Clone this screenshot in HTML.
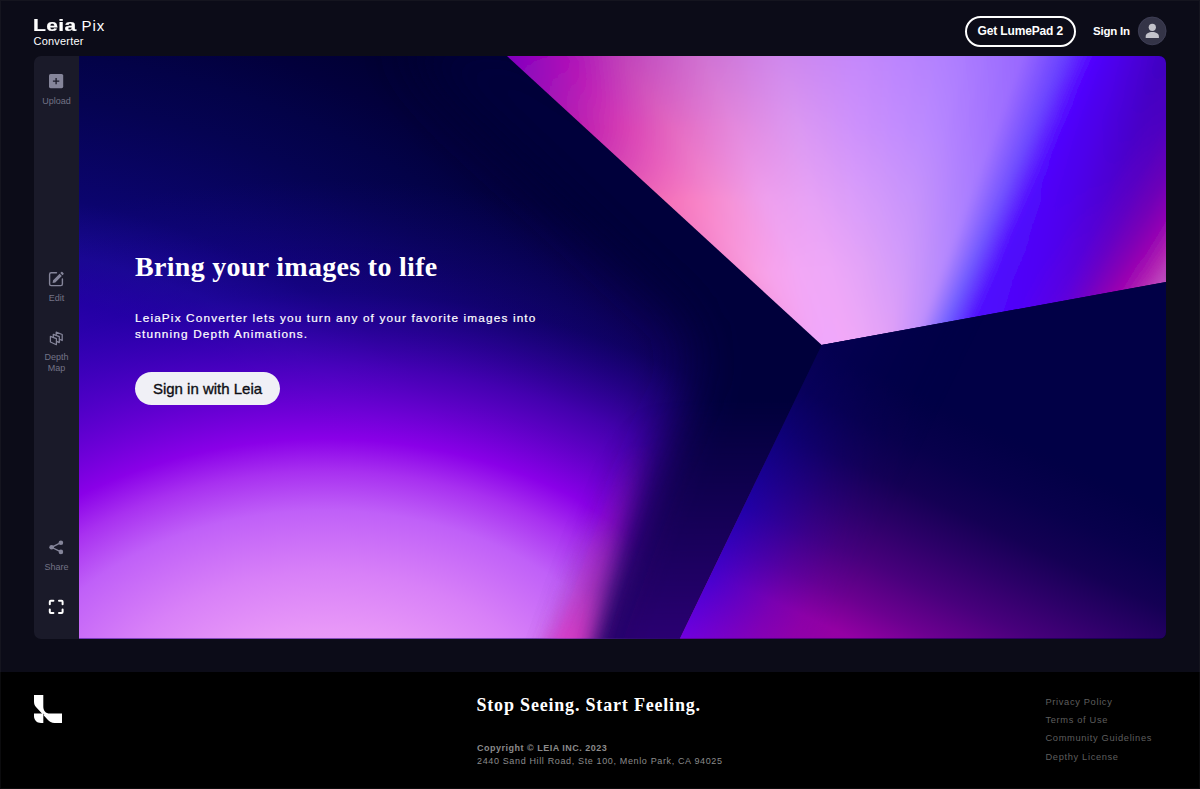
<!DOCTYPE html>
<html lang="en">
<head>
<meta charset="utf-8">
<title>LeiaPix Converter</title>
<style>
*{box-sizing:border-box;margin:0;padding:0}
html,body{width:1200px;height:789px;overflow:hidden;background:#0c0c18;font-family:"Liberation Sans",sans-serif;color:#fff}
#frame{position:absolute;left:0;top:0;width:1200px;height:789px;border:1px solid #15151f;pointer-events:none;z-index:50}
#frame2{position:absolute;left:0;top:672px;width:1200px;height:117px;border:1px solid #0b0b0d;border-top:none;pointer-events:none;z-index:51}
.abs{position:absolute;white-space:nowrap}
/* header */
#logo-leia{left:33px;top:15px;font-size:16.5px;font-weight:bold;letter-spacing:.3px;line-height:20px;transform:scaleX(1.27);transform-origin:0 50%;-webkit-text-stroke:.2px #fff}
#logo-pix{left:81.5px;top:15.5px;font-size:15px;letter-spacing:.9px;line-height:20px}
#logo-conv{left:33.5px;top:33.5px;font-size:11px;letter-spacing:.2px;line-height:14px}
#btn-lume{left:964.5px;top:15.5px;width:111.5px;height:31px;border:2px solid #fff;border-radius:16px;font-size:12px;font-weight:bold;text-align:center;line-height:27px;letter-spacing:-.15px}
#signin{left:1093px;top:23px;font-size:11.5px;font-weight:bold;line-height:16px;letter-spacing:-.2px}
#avatar{left:1138px;top:17px;width:28.5px;height:28.5px;border-radius:50%;background:#3b3b4b}
/* sidebar */
#side{left:34px;top:56px;width:45px;height:582.5px;background:#1a1a29;border-radius:7px 0 0 7px}
.slabel{font-size:9px;color:#737386;text-align:center;width:45px;left:34px;line-height:11px;white-space:normal}
/* hero */
#hero{left:79px;top:56px;width:1087px;height:582.5px;border-radius:0 7px 7px 0;overflow:hidden;background:#00003c}
#hero svg{display:block}
#h1{left:135px;top:250.3px;font-family:"Liberation Serif",serif;font-weight:bold;font-size:28px;line-height:34px;letter-spacing:.3px}
#para{left:135px;top:310.3px;font-size:11.8px;line-height:16px;letter-spacing:1.14px;-webkit-text-stroke:.2px #fff}
#cta{left:135px;top:371.5px;width:145px;height:33px;border-radius:17px;background:#f0f0f6;color:#0e0e14;font-size:15px;text-align:center;line-height:33px;-webkit-text-stroke:.35px #0e0e14}
/* footer */
#footer{left:0;top:672px;width:1200px;height:117px;background:#000}
#tag{left:476.5px;top:693.5px;font-family:"Liberation Serif",serif;font-weight:bold;font-size:18px;line-height:22px;letter-spacing:.81px}
#copy1{left:477px;top:742.4px;font-size:9px;letter-spacing:.5px;font-weight:bold;color:#8b8b8b;line-height:12px}
#copy2{left:477px;top:755px;font-size:9px;letter-spacing:.64px;color:#8b8b8b;line-height:12px}
.flink{left:1045.5px;font-size:9.3px;letter-spacing:.65px;color:#5e5e5e;line-height:12px}
</style>
</head>
<body>
<div id="frame"></div>
<div id="frame2"></div>

<div id="logo-leia" class="abs">Leia</div>
<div id="logo-pix" class="abs">Pix</div>
<div id="logo-conv" class="abs">Converter</div>
<div id="btn-lume" class="abs">Get LumePad 2</div>
<div id="signin" class="abs">Sign In</div>


<div id="side" class="abs"></div>
<div class="abs slabel" style="top:96px">Upload</div>
<div class="abs slabel" style="top:293px">Edit</div>
<div class="abs slabel" style="top:352px">Depth<br>Map</div>
<div class="abs slabel" style="top:561.5px">Share</div>


<svg class="abs" style="left:34px;top:56px" width="45" height="583" viewBox="34 56 45 583">
  <!-- upload (add box) -->
  <rect x="49" y="74" width="14.2" height="14.2" rx="1.6" fill="#85859a"/>
  <path d="M56.1 77.9v6.4M52.9 81.1h6.4" stroke="#1a1a29" stroke-width="1.3" fill="none"/>
  <!-- edit square -->
  <path d="M56.5 272.8H51.2a1.6 1.6 0 0 0-1.6 1.6v9.6a1.6 1.6 0 0 0 1.6 1.6h9.6a1.6 1.6 0 0 0 1.6-1.6V279" stroke="#85859a" stroke-width="1.4" fill="none" stroke-linecap="round"/>
  <path d="M52.6 283l.5-2.7 6.5-6.5 2.2 2.2-6.5 6.5zM60.3 273.1l1-1a.8.8 0 0 1 1.1 0l1.1 1.1a.8.8 0 0 1 0 1.1l-1 1z" fill="#85859a"/>
  <!-- depth map layers -->
  <g stroke="#85859a" stroke-width="1.25" fill="#1a1a29" stroke-linejoin="round">
    <path d="M56.2 332.2L62.2 334.5L62.2 340.5L56.2 337.8z"/>
    <path d="M53.3 334.3L59.3 336.6L59.3 342.6L53.3 339.9z"/>
    <path d="M50.4 336.4L56.4 338.7L56.4 344.7L50.4 342.0z"/>
  </g>
  <!-- share -->
  <g fill="#85859a">
    <circle cx="60.9" cy="542.7" r="2.3"/><circle cx="51.6" cy="547.3" r="2.3"/><circle cx="60.9" cy="551.9" r="2.3"/>
  </g>
  <path d="M60.9 542.7L51.6 547.3L60.9 551.9" stroke="#85859a" stroke-width="1.3" fill="none"/>
  <!-- fullscreen -->
  <path d="M49.8 604.2v-2.4a1 1 0 0 1 1-1h2.6M59 600.8h2.6a1 1 0 0 1 1 1v2.4M62.6 609.6v2.4a1 1 0 0 1-1 1H59M53.4 613h-2.6a1 1 0 0 1-1-1v-2.4" stroke="#fff" stroke-width="2" fill="none" stroke-linecap="round" stroke-linejoin="round"/>
</svg>
<svg class="abs" style="left:1136px;top:14px" width="34" height="34" viewBox="1136 14 34 34">
  <circle cx="1152.2" cy="30.9" r="13.9" fill="#343447" stroke="#43435a" stroke-width=".8"/>
  <circle cx="1152.3" cy="27.3" r="3.6" fill="#c2c2ca"/>
  <path d="M1145.7 38v-1.6c0-2.6 3-4.3 6.6-4.3s6.6 1.7 6.6 4.3V38z" fill="#c2c2ca"/>
</svg>
<svg class="abs" style="left:33.8px;top:694.8px;z-index:5" width="28" height="28" viewBox="0 0 28 28">
  <path d="M0 0H9.3V11.5C9.3 15.5 11.5 18.6 16 18.6H28V28H20.5C17.5 28 15.5 26.8 13.5 24.6L2.2 12.3C.7 10.7 0 9 0 6.5Z" fill="#fff"/>
  <path d="M0 18.6H9.3V28H7C2.8 28 0 25.2 0 21Z" fill="#fff"/>
  <path d="M8.2 17.5L10.5 19.8L9.3 19.8L9.3 18.6Z" fill="#000"/>
</svg>
<div id="hero" class="abs">
<svg width="1087" height="582.5" viewBox="79 56 1087 582.5">
<defs>
  <clipPath id="cA"><polygon points="79,56 507,56 821.7,345.1 680,638.5 79,638.5"/></clipPath>
  <clipPath id="cB"><polygon points="507,56 1166,56 1166,282 821.7,345.1"/></clipPath>
  <clipPath id="cC"><polygon points="821.7,345.1 1166,282 1166,638.5 680,638.5"/></clipPath>
  <filter id="b3" filterUnits="userSpaceOnUse" x="0" y="-100" width="1400" height="900"><feGaussianBlur stdDeviation="3"/></filter>
  <filter id="b10" filterUnits="userSpaceOnUse" x="0" y="-100" width="1400" height="900"><feGaussianBlur stdDeviation="10"/></filter>
  <filter id="b15" filterUnits="userSpaceOnUse" x="0" y="-100" width="1400" height="900"><feGaussianBlur stdDeviation="15"/></filter>
  <filter id="b20" filterUnits="userSpaceOnUse" x="0" y="-100" width="1400" height="900"><feGaussianBlur stdDeviation="20"/></filter>
  <filter id="b25" filterUnits="userSpaceOnUse" x="0" y="-100" width="1400" height="900"><feGaussianBlur stdDeviation="25"/></filter>
  <filter id="b30" filterUnits="userSpaceOnUse" x="0" y="-100" width="1400" height="900"><feGaussianBlur stdDeviation="30"/></filter>
  <radialGradient id="gAmb" gradientUnits="userSpaceOnUse" cx="-50" cy="700" r="850" gradientTransform="translate(-50 700) scale(1.18 1) translate(50 -700)">
    <stop offset="0" stop-color="#4800c8"/>
    <stop offset="0.385" stop-color="#3800b8"/>
    <stop offset="0.485" stop-color="#2000a0"/>
    <stop offset="0.535" stop-color="#180890"/>
    <stop offset="0.60" stop-color="#0b046e"/>
    <stop offset="0.714" stop-color="#050352"/>
    <stop offset="0.767" stop-color="#030248"/>
    <stop offset="0.821" stop-color="#02003c"/>
    <stop offset="0.896" stop-color="#00002e"/>
    <stop offset="1" stop-color="#00002a"/>
  </radialGradient>
  <radialGradient id="gA" gradientUnits="userSpaceOnUse" cx="325" cy="740" r="560" gradientTransform="translate(325 740) scale(1.4 1) translate(-325 -740)">
    <stop offset="0" stop-color="#f4a4fa"/>
    <stop offset="0.196" stop-color="#e898f8"/>
    <stop offset="0.30" stop-color="#d880f8"/>
    <stop offset="0.41" stop-color="#c060f8"/>
    <stop offset="0.48" stop-color="#a830f0"/>
    <stop offset="0.5375" stop-color="#8a00e8"/>
    <stop offset="0.668" stop-color="#5800cc" stop-opacity=".75"/>
    <stop offset="0.80" stop-color="#3000b4" stop-opacity=".28"/>
    <stop offset="1" stop-color="#2000a0" stop-opacity="0"/>
  </radialGradient>
  <linearGradient id="gShade" gradientUnits="userSpaceOnUse" x1="0" y1="380" x2="0" y2="640">
    <stop offset="0" stop-color="#00003a"/>
    <stop offset="1" stop-color="#1c0064"/>
  </linearGradient>
  <linearGradient id="gMag" gradientUnits="userSpaceOnUse" x1="0" y1="420" x2="0" y2="640">
    <stop offset="0" stop-color="#6000a8" stop-opacity="0"/>
    <stop offset="0.5" stop-color="#8000b0" stop-opacity=".7"/>
    <stop offset="1" stop-color="#e020c0" stop-opacity="1"/>
  </linearGradient>
  <linearGradient id="gC" gradientUnits="userSpaceOnUse" x1="821.7" y1="345.1" x2="683.5" y2="640.5">
    <stop offset="0" stop-color="#010046"/>
    <stop offset="0.03" stop-color="#020046"/>
    <stop offset="0.16" stop-color="#08004c"/>
    <stop offset="0.285" stop-color="#140054"/>
    <stop offset="0.41" stop-color="#2c0068"/>
    <stop offset="0.54" stop-color="#48007c"/>
    <stop offset="0.666" stop-color="#6c0090"/>
    <stop offset="0.775" stop-color="#9400a4"/>
    <stop offset="1" stop-color="#9c00aa"/>
  </linearGradient>
  <linearGradient id="gCv" gradientUnits="userSpaceOnUse" x1="821.7" y1="345.1" x2="680" y2="638.5">
    <stop offset="0" stop-color="#050052"/>
    <stop offset="0.15" stop-color="#08005c"/>
    <stop offset="0.3" stop-color="#0e0078"/>
    <stop offset="0.55" stop-color="#2000a8"/>
    <stop offset="0.8" stop-color="#4800d0"/>
    <stop offset="1" stop-color="#7000e0"/>
  </linearGradient>
  <linearGradient id="gmBot" gradientUnits="userSpaceOnUse" x1="0" y1="400" x2="0" y2="640">
    <stop offset="0" stop-color="#000"/><stop offset="1" stop-color="#fff"/>
  </linearGradient>
  <mask id="mBot" maskUnits="userSpaceOnUse" x="79" y="56" width="1087" height="583"><rect x="79" y="56" width="1087" height="583" fill="url(#gmBot)"/></mask>
  <linearGradient id="gmMag" gradientUnits="userSpaceOnUse" x1="0" y1="440" x2="0" y2="640">
    <stop offset="0" stop-color="#000"/><stop offset="0.45" stop-color="#444"/><stop offset="0.75" stop-color="#888"/><stop offset="1" stop-color="#fff"/>
  </linearGradient>
  <mask id="mMag" maskUnits="userSpaceOnUse" x="79" y="56" width="1087" height="583"><rect x="79" y="56" width="1087" height="583" fill="url(#gmMag)"/></mask>
  <linearGradient id="gmE3" gradientUnits="userSpaceOnUse" x1="821.7" y1="345.1" x2="943.3" y2="403.8">
    <stop offset="0" stop-color="#fff" stop-opacity="1"/>
    <stop offset="0.25" stop-color="#fff" stop-opacity=".66"/>
    <stop offset="0.5" stop-color="#fff" stop-opacity=".33"/>
    <stop offset="0.75" stop-color="#fff" stop-opacity=".1"/>
    <stop offset="1" stop-color="#fff" stop-opacity="0"/>
  </linearGradient>
  <mask id="mE3" maskUnits="userSpaceOnUse" x="79" y="56" width="1087" height="583"><rect x="79" y="56" width="1087" height="583" fill="url(#gmE3)"/></mask>
<linearGradient id="s0" gradientUnits="userSpaceOnUse" x1="444.2" y1="56.0" x2="765.5" y2="354.5"><stop offset="0.00" stop-color="#8000c0"/><stop offset="0.25" stop-color="#c020b0"/><stop offset="0.50" stop-color="#f470b8"/><stop offset="0.75" stop-color="#f894d8"/><stop offset="1.00" stop-color="#f0a8fc"/></linearGradient>
<linearGradient id="s1" gradientUnits="userSpaceOnUse" x1="452.6" y1="56.0" x2="773.0" y2="353.2"><stop offset="0.00" stop-color="#8000c0"/><stop offset="0.25" stop-color="#c020b0"/><stop offset="0.50" stop-color="#f470b8"/><stop offset="0.75" stop-color="#f894d8"/><stop offset="1.00" stop-color="#f0a8fc"/></linearGradient>
<linearGradient id="s2" gradientUnits="userSpaceOnUse" x1="460.9" y1="56.0" x2="780.5" y2="352.0"><stop offset="0.00" stop-color="#8000c0"/><stop offset="0.25" stop-color="#c020b0"/><stop offset="0.50" stop-color="#f470b8"/><stop offset="0.75" stop-color="#f894d8"/><stop offset="1.00" stop-color="#f0a8fc"/></linearGradient>
<linearGradient id="s3" gradientUnits="userSpaceOnUse" x1="469.3" y1="56.0" x2="788.0" y2="350.7"><stop offset="0.00" stop-color="#8000c0"/><stop offset="0.25" stop-color="#c020b0"/><stop offset="0.50" stop-color="#f470b8"/><stop offset="0.75" stop-color="#f894d8"/><stop offset="1.00" stop-color="#f0a8fc"/></linearGradient>
<linearGradient id="s4" gradientUnits="userSpaceOnUse" x1="477.7" y1="56.0" x2="795.5" y2="349.5"><stop offset="0.00" stop-color="#8000c0"/><stop offset="0.25" stop-color="#c020b0"/><stop offset="0.50" stop-color="#f470b8"/><stop offset="0.75" stop-color="#f894d8"/><stop offset="1.00" stop-color="#f0a8fc"/></linearGradient>
<linearGradient id="s5" gradientUnits="userSpaceOnUse" x1="486.1" y1="56.0" x2="803.0" y2="348.2"><stop offset="0.00" stop-color="#8000c0"/><stop offset="0.25" stop-color="#c020b0"/><stop offset="0.50" stop-color="#f470b8"/><stop offset="0.75" stop-color="#f894d8"/><stop offset="1.00" stop-color="#f0a8fc"/></linearGradient>
<linearGradient id="s6" gradientUnits="userSpaceOnUse" x1="494.4" y1="56.0" x2="810.5" y2="347.0"><stop offset="0.00" stop-color="#8000c0"/><stop offset="0.25" stop-color="#c020b0"/><stop offset="0.50" stop-color="#f470b8"/><stop offset="0.75" stop-color="#f894d8"/><stop offset="1.00" stop-color="#f0a8fc"/></linearGradient>
<linearGradient id="s7" gradientUnits="userSpaceOnUse" x1="502.8" y1="56.0" x2="818.0" y2="345.7"><stop offset="0.00" stop-color="#8000c0"/><stop offset="0.25" stop-color="#c020b0"/><stop offset="0.50" stop-color="#f470b8"/><stop offset="0.75" stop-color="#f894d8"/><stop offset="1.00" stop-color="#f0a8fc"/></linearGradient>
<linearGradient id="s8" gradientUnits="userSpaceOnUse" x1="510.3" y1="56.0" x2="821.9" y2="345.1"><stop offset="0.00" stop-color="#8200c0"/><stop offset="0.25" stop-color="#c222b0"/><stop offset="0.50" stop-color="#f471b9"/><stop offset="0.75" stop-color="#f895d9"/><stop offset="1.00" stop-color="#f0a8fc"/></linearGradient>
<linearGradient id="s9" gradientUnits="userSpaceOnUse" x1="516.9" y1="56.0" x2="822.3" y2="345.0"><stop offset="0.00" stop-color="#8802be"/><stop offset="0.25" stop-color="#c426b0"/><stop offset="0.50" stop-color="#f473ba"/><stop offset="0.75" stop-color="#f896da"/><stop offset="1.00" stop-color="#f0a8fc"/></linearGradient>
<linearGradient id="s10" gradientUnits="userSpaceOnUse" x1="523.6" y1="56.0" x2="822.8" y2="344.9"><stop offset="0.00" stop-color="#8c02be"/><stop offset="0.25" stop-color="#c82ab2"/><stop offset="0.50" stop-color="#f675bc"/><stop offset="0.75" stop-color="#f898dc"/><stop offset="1.00" stop-color="#f0a8fc"/></linearGradient>
<linearGradient id="s11" gradientUnits="userSpaceOnUse" x1="530.2" y1="56.0" x2="823.2" y2="344.8"><stop offset="0.00" stop-color="#9204bc"/><stop offset="0.25" stop-color="#ca2eb2"/><stop offset="0.50" stop-color="#f677bd"/><stop offset="0.75" stop-color="#f899dd"/><stop offset="1.00" stop-color="#f0a8fc"/></linearGradient>
<linearGradient id="s12" gradientUnits="userSpaceOnUse" x1="536.8" y1="56.0" x2="823.6" y2="344.7"><stop offset="0.00" stop-color="#9604bc"/><stop offset="0.25" stop-color="#ce32b2"/><stop offset="0.50" stop-color="#f679bf"/><stop offset="0.75" stop-color="#f89bdf"/><stop offset="1.00" stop-color="#f0a8fc"/></linearGradient>
<linearGradient id="s13" gradientUnits="userSpaceOnUse" x1="543.4" y1="56.0" x2="824.1" y2="344.7"><stop offset="0.00" stop-color="#9c06ba"/><stop offset="0.25" stop-color="#d036b2"/><stop offset="0.50" stop-color="#f67bc0"/><stop offset="0.75" stop-color="#f89ce0"/><stop offset="1.00" stop-color="#f0a8fc"/></linearGradient>
<linearGradient id="s14" gradientUnits="userSpaceOnUse" x1="550.1" y1="56.0" x2="824.5" y2="344.6"><stop offset="0.00" stop-color="#a006ba"/><stop offset="0.25" stop-color="#d43ab4"/><stop offset="0.50" stop-color="#f87dc2"/><stop offset="0.75" stop-color="#f89ee2"/><stop offset="1.00" stop-color="#f0a8fc"/></linearGradient>
<linearGradient id="s15" gradientUnits="userSpaceOnUse" x1="556.7" y1="56.0" x2="824.9" y2="344.5"><stop offset="0.00" stop-color="#a608b8"/><stop offset="0.25" stop-color="#d63eb4"/><stop offset="0.50" stop-color="#f87fc3"/><stop offset="0.75" stop-color="#f89fe3"/><stop offset="1.00" stop-color="#f0a8fc"/></linearGradient>
<linearGradient id="s16" gradientUnits="userSpaceOnUse" x1="563.8" y1="56.0" x2="825.4" y2="344.4"><stop offset="0.00" stop-color="#aa0cb8"/><stop offset="0.25" stop-color="#d942b5"/><stop offset="0.50" stop-color="#f881c5"/><stop offset="0.75" stop-color="#f8a0e4"/><stop offset="1.00" stop-color="#f0a8fc"/></linearGradient>
<linearGradient id="s17" gradientUnits="userSpaceOnUse" x1="571.2" y1="56.0" x2="825.8" y2="344.4"><stop offset="0.00" stop-color="#ac12b8"/><stop offset="0.25" stop-color="#da48b6"/><stop offset="0.50" stop-color="#f883c7"/><stop offset="0.75" stop-color="#f8a0e6"/><stop offset="1.00" stop-color="#f0a8fc"/></linearGradient>
<linearGradient id="s18" gradientUnits="userSpaceOnUse" x1="578.8" y1="56.0" x2="826.2" y2="344.3"><stop offset="0.00" stop-color="#b01ab8"/><stop offset="0.25" stop-color="#dc4cb8"/><stop offset="0.50" stop-color="#f885c9"/><stop offset="0.75" stop-color="#f8a2e7"/><stop offset="1.00" stop-color="#f0a8fc"/></linearGradient>
<linearGradient id="s19" gradientUnits="userSpaceOnUse" x1="586.2" y1="56.0" x2="826.6" y2="344.2"><stop offset="0.00" stop-color="#b220b8"/><stop offset="0.25" stop-color="#dd52b9"/><stop offset="0.50" stop-color="#f787cb"/><stop offset="0.75" stop-color="#f7a2e8"/><stop offset="1.00" stop-color="#f0a8fc"/></linearGradient>
<linearGradient id="s20" gradientUnits="userSpaceOnUse" x1="593.8" y1="56.0" x2="827.1" y2="344.1"><stop offset="0.00" stop-color="#b628b8"/><stop offset="0.25" stop-color="#df56bb"/><stop offset="0.50" stop-color="#f789cd"/><stop offset="0.75" stop-color="#f7a2ea"/><stop offset="1.00" stop-color="#f0a8fc"/></linearGradient>
<linearGradient id="s21" gradientUnits="userSpaceOnUse" x1="601.2" y1="56.0" x2="827.5" y2="344.0"><stop offset="0.00" stop-color="#b82eb8"/><stop offset="0.25" stop-color="#e05cbc"/><stop offset="0.50" stop-color="#f68bcf"/><stop offset="0.75" stop-color="#f6a2eb"/><stop offset="1.00" stop-color="#f0a8fc"/></linearGradient>
<linearGradient id="s22" gradientUnits="userSpaceOnUse" x1="608.8" y1="56.0" x2="827.9" y2="344.0"><stop offset="0.00" stop-color="#bc36b8"/><stop offset="0.25" stop-color="#e260be"/><stop offset="0.50" stop-color="#f68dd1"/><stop offset="0.75" stop-color="#f6a4ec"/><stop offset="1.00" stop-color="#f0a8fc"/></linearGradient>
<linearGradient id="s23" gradientUnits="userSpaceOnUse" x1="616.2" y1="56.0" x2="828.4" y2="343.9"><stop offset="0.00" stop-color="#be3cb8"/><stop offset="0.25" stop-color="#e366bf"/><stop offset="0.50" stop-color="#f68fd3"/><stop offset="0.75" stop-color="#f6a4ee"/><stop offset="1.00" stop-color="#f0a8fc"/></linearGradient>
<linearGradient id="s24" gradientUnits="userSpaceOnUse" x1="625.0" y1="56.0" x2="829.0" y2="343.8"><stop offset="0.00" stop-color="#c143ba"/><stop offset="0.25" stop-color="#e46ac2"/><stop offset="0.50" stop-color="#f691d6"/><stop offset="0.75" stop-color="#f6a4ee"/><stop offset="1.00" stop-color="#f0a8fc"/></linearGradient>
<linearGradient id="s25" gradientUnits="userSpaceOnUse" x1="635.0" y1="56.0" x2="829.9" y2="343.6"><stop offset="0.00" stop-color="#c349bc"/><stop offset="0.25" stop-color="#e46ec6"/><stop offset="0.50" stop-color="#f493d8"/><stop offset="0.75" stop-color="#f6a4f0"/><stop offset="1.00" stop-color="#f0a8fc"/></linearGradient>
<linearGradient id="s26" gradientUnits="userSpaceOnUse" x1="645.0" y1="56.0" x2="830.7" y2="343.4"><stop offset="0.00" stop-color="#c54fc0"/><stop offset="0.25" stop-color="#e472c8"/><stop offset="0.50" stop-color="#f495dc"/><stop offset="0.75" stop-color="#f4a6f0"/><stop offset="1.00" stop-color="#f0a8fc"/></linearGradient>
<linearGradient id="s27" gradientUnits="userSpaceOnUse" x1="655.0" y1="56.0" x2="831.6" y2="343.3"><stop offset="0.00" stop-color="#c755c2"/><stop offset="0.25" stop-color="#e476cc"/><stop offset="0.50" stop-color="#f297e0"/><stop offset="0.75" stop-color="#f4a6f2"/><stop offset="1.00" stop-color="#f0a8fc"/></linearGradient>
<linearGradient id="s28" gradientUnits="userSpaceOnUse" x1="665.0" y1="56.0" x2="832.5" y2="343.1"><stop offset="0.00" stop-color="#c95bc6"/><stop offset="0.25" stop-color="#e47ad0"/><stop offset="0.50" stop-color="#f299e2"/><stop offset="0.75" stop-color="#f4a6f2"/><stop offset="1.00" stop-color="#f0a8fc"/></linearGradient>
<linearGradient id="s29" gradientUnits="userSpaceOnUse" x1="675.0" y1="56.0" x2="833.3" y2="343.0"><stop offset="0.00" stop-color="#cb61c8"/><stop offset="0.25" stop-color="#e47ed4"/><stop offset="0.50" stop-color="#f09be6"/><stop offset="0.75" stop-color="#f4a6f4"/><stop offset="1.00" stop-color="#f0a8fc"/></linearGradient>
<linearGradient id="s30" gradientUnits="userSpaceOnUse" x1="685.0" y1="56.0" x2="834.2" y2="342.8"><stop offset="0.00" stop-color="#cd67cc"/><stop offset="0.25" stop-color="#e482d6"/><stop offset="0.50" stop-color="#f09dea"/><stop offset="0.75" stop-color="#f2a8f4"/><stop offset="1.00" stop-color="#f0a8fc"/></linearGradient>
<linearGradient id="s31" gradientUnits="userSpaceOnUse" x1="695.0" y1="56.0" x2="835.0" y2="342.7"><stop offset="0.00" stop-color="#cf6dce"/><stop offset="0.25" stop-color="#e486da"/><stop offset="0.50" stop-color="#ee9fec"/><stop offset="0.75" stop-color="#f2a8f6"/><stop offset="1.00" stop-color="#f0a8fc"/></linearGradient>
<linearGradient id="s32" gradientUnits="userSpaceOnUse" x1="705.0" y1="56.0" x2="836.1" y2="342.5"><stop offset="0.00" stop-color="#d072d2"/><stop offset="0.25" stop-color="#e489de"/><stop offset="0.50" stop-color="#eea0ee"/><stop offset="0.75" stop-color="#f2a8f6"/><stop offset="1.00" stop-color="#f0a8fc"/></linearGradient>
<linearGradient id="s33" gradientUnits="userSpaceOnUse" x1="715.0" y1="56.0" x2="837.4" y2="342.2"><stop offset="0.00" stop-color="#d074d6"/><stop offset="0.25" stop-color="#e28be0"/><stop offset="0.50" stop-color="#eca0f0"/><stop offset="0.75" stop-color="#f2a8f6"/><stop offset="1.00" stop-color="#f0a8fc"/></linearGradient>
<linearGradient id="s34" gradientUnits="userSpaceOnUse" x1="725.0" y1="56.0" x2="838.7" y2="342.0"><stop offset="0.00" stop-color="#d078d8"/><stop offset="0.25" stop-color="#e28de3"/><stop offset="0.50" stop-color="#eca0f0"/><stop offset="0.75" stop-color="#f0a8f6"/><stop offset="1.00" stop-color="#f0a8fa"/></linearGradient>
<linearGradient id="s35" gradientUnits="userSpaceOnUse" x1="735.0" y1="56.0" x2="840.0" y2="341.7"><stop offset="0.00" stop-color="#d07adc"/><stop offset="0.25" stop-color="#e08fe6"/><stop offset="0.50" stop-color="#eaa1f2"/><stop offset="0.75" stop-color="#f0a8f7"/><stop offset="1.00" stop-color="#f1a8fa"/></linearGradient>
<linearGradient id="s36" gradientUnits="userSpaceOnUse" x1="745.0" y1="56.0" x2="841.3" y2="341.5"><stop offset="0.00" stop-color="#d07ee0"/><stop offset="0.25" stop-color="#e091e8"/><stop offset="0.50" stop-color="#eaa1f2"/><stop offset="0.75" stop-color="#f0a8f7"/><stop offset="1.00" stop-color="#f1a8fa"/></linearGradient>
<linearGradient id="s37" gradientUnits="userSpaceOnUse" x1="755.0" y1="56.0" x2="842.6" y2="341.3"><stop offset="0.00" stop-color="#d080e4"/><stop offset="0.25" stop-color="#de93eb"/><stop offset="0.50" stop-color="#e8a2f4"/><stop offset="0.75" stop-color="#f0a8f8"/><stop offset="1.00" stop-color="#f2a8fa"/></linearGradient>
<linearGradient id="s38" gradientUnits="userSpaceOnUse" x1="765.0" y1="56.0" x2="843.9" y2="341.0"><stop offset="0.00" stop-color="#d084e6"/><stop offset="0.25" stop-color="#de95ee"/><stop offset="0.50" stop-color="#e8a2f4"/><stop offset="0.75" stop-color="#eea8f8"/><stop offset="1.00" stop-color="#f2a8f8"/></linearGradient>
<linearGradient id="s39" gradientUnits="userSpaceOnUse" x1="775.0" y1="56.0" x2="845.2" y2="340.8"><stop offset="0.00" stop-color="#d086ea"/><stop offset="0.25" stop-color="#dc97f0"/><stop offset="0.50" stop-color="#e6a2f6"/><stop offset="0.75" stop-color="#eea8f8"/><stop offset="1.00" stop-color="#f2a8f8"/></linearGradient>
<linearGradient id="s40" gradientUnits="userSpaceOnUse" x1="785.0" y1="56.0" x2="846.7" y2="340.5"><stop offset="0.00" stop-color="#cf88ed"/><stop offset="0.25" stop-color="#db98f2"/><stop offset="0.50" stop-color="#e5a2f6"/><stop offset="0.75" stop-color="#eea8f8"/><stop offset="1.00" stop-color="#f2a8f8"/></linearGradient>
<linearGradient id="s41" gradientUnits="userSpaceOnUse" x1="795.0" y1="56.0" x2="848.4" y2="340.2"><stop offset="0.00" stop-color="#ce88ef"/><stop offset="0.25" stop-color="#d996f4"/><stop offset="0.50" stop-color="#e3a0f6"/><stop offset="0.75" stop-color="#eca8f8"/><stop offset="1.00" stop-color="#f0a8f8"/></linearGradient>
<linearGradient id="s42" gradientUnits="userSpaceOnUse" x1="805.0" y1="56.0" x2="850.1" y2="339.9"><stop offset="0.00" stop-color="#cc88f1"/><stop offset="0.25" stop-color="#d796f5"/><stop offset="0.50" stop-color="#e2a0f8"/><stop offset="0.75" stop-color="#eba6f8"/><stop offset="1.00" stop-color="#f0a8f8"/></linearGradient>
<linearGradient id="s43" gradientUnits="userSpaceOnUse" x1="815.0" y1="56.0" x2="851.8" y2="339.6"><stop offset="0.00" stop-color="#cb88f3"/><stop offset="0.25" stop-color="#d594f6"/><stop offset="0.50" stop-color="#e0a0f8"/><stop offset="0.75" stop-color="#eaa6f8"/><stop offset="1.00" stop-color="#f0a8f8"/></linearGradient>
<linearGradient id="s44" gradientUnits="userSpaceOnUse" x1="825.0" y1="56.0" x2="853.5" y2="339.3"><stop offset="0.00" stop-color="#c988f5"/><stop offset="0.25" stop-color="#d394f8"/><stop offset="0.50" stop-color="#de9ef8"/><stop offset="0.75" stop-color="#e8a6f8"/><stop offset="1.00" stop-color="#eea8f8"/></linearGradient>
<linearGradient id="s45" gradientUnits="userSpaceOnUse" x1="835.0" y1="56.0" x2="855.3" y2="338.9"><stop offset="0.00" stop-color="#c888f7"/><stop offset="0.25" stop-color="#d192f9"/><stop offset="0.50" stop-color="#dc9ef8"/><stop offset="0.75" stop-color="#e7a6f8"/><stop offset="1.00" stop-color="#eea8f8"/></linearGradient>
<linearGradient id="s46" gradientUnits="userSpaceOnUse" x1="845.0" y1="56.0" x2="857.0" y2="338.6"><stop offset="0.00" stop-color="#c688f9"/><stop offset="0.25" stop-color="#cf92fa"/><stop offset="0.50" stop-color="#db9efa"/><stop offset="0.75" stop-color="#e6a4f8"/><stop offset="1.00" stop-color="#eea8f8"/></linearGradient>
<linearGradient id="s47" gradientUnits="userSpaceOnUse" x1="855.0" y1="56.0" x2="858.7" y2="338.3"><stop offset="0.00" stop-color="#c588fb"/><stop offset="0.25" stop-color="#cd90fc"/><stop offset="0.50" stop-color="#d99cfa"/><stop offset="0.75" stop-color="#e4a4f8"/><stop offset="1.00" stop-color="#eca8f8"/></linearGradient>
<linearGradient id="s48" gradientUnits="userSpaceOnUse" x1="865.6" y1="56.0" x2="861.5" y2="337.8"><stop offset="0.00" stop-color="#c388fc"/><stop offset="0.25" stop-color="#cb90fc"/><stop offset="0.50" stop-color="#d79cfa"/><stop offset="0.75" stop-color="#e3a4f8"/><stop offset="1.00" stop-color="#eba8f8"/></linearGradient>
<linearGradient id="s49" gradientUnits="userSpaceOnUse" x1="876.9" y1="56.0" x2="865.4" y2="337.1"><stop offset="0.00" stop-color="#c086fc"/><stop offset="0.25" stop-color="#c88efc"/><stop offset="0.50" stop-color="#d49afa"/><stop offset="0.75" stop-color="#e0a2f8"/><stop offset="1.00" stop-color="#eaa6f8"/></linearGradient>
<linearGradient id="s50" gradientUnits="userSpaceOnUse" x1="888.1" y1="56.0" x2="869.3" y2="336.4"><stop offset="0.00" stop-color="#be86fd"/><stop offset="0.25" stop-color="#c68efd"/><stop offset="0.50" stop-color="#d299fa"/><stop offset="0.75" stop-color="#dea1f8"/><stop offset="1.00" stop-color="#e8a6f8"/></linearGradient>
<linearGradient id="s51" gradientUnits="userSpaceOnUse" x1="899.4" y1="56.0" x2="873.1" y2="335.7"><stop offset="0.00" stop-color="#bb84fe"/><stop offset="0.25" stop-color="#c38cfe"/><stop offset="0.50" stop-color="#cf98fb"/><stop offset="0.75" stop-color="#dba0f9"/><stop offset="1.00" stop-color="#e7a4f8"/></linearGradient>
<linearGradient id="s52" gradientUnits="userSpaceOnUse" x1="910.6" y1="56.0" x2="877.0" y2="335.0"><stop offset="0.00" stop-color="#b984fe"/><stop offset="0.25" stop-color="#c18cfe"/><stop offset="0.50" stop-color="#cd96fb"/><stop offset="0.75" stop-color="#d99ef9"/><stop offset="1.00" stop-color="#e5a4f8"/></linearGradient>
<linearGradient id="s53" gradientUnits="userSpaceOnUse" x1="921.9" y1="56.0" x2="880.9" y2="334.3"><stop offset="0.00" stop-color="#b682fe"/><stop offset="0.25" stop-color="#be8afe"/><stop offset="0.50" stop-color="#ca95fc"/><stop offset="0.75" stop-color="#d69dfa"/><stop offset="1.00" stop-color="#e4a2f8"/></linearGradient>
<linearGradient id="s54" gradientUnits="userSpaceOnUse" x1="933.1" y1="56.0" x2="884.7" y2="333.5"><stop offset="0.00" stop-color="#b482fe"/><stop offset="0.25" stop-color="#bc8afe"/><stop offset="0.50" stop-color="#c894fc"/><stop offset="0.75" stop-color="#d49cfa"/><stop offset="1.00" stop-color="#e2a2f8"/></linearGradient>
<linearGradient id="s55" gradientUnits="userSpaceOnUse" x1="944.4" y1="56.0" x2="888.6" y2="332.8"><stop offset="0.00" stop-color="#b180ff"/><stop offset="0.25" stop-color="#b988ff"/><stop offset="0.50" stop-color="#c592fc"/><stop offset="0.75" stop-color="#d19afa"/><stop offset="1.00" stop-color="#e1a0f8"/></linearGradient>
<linearGradient id="s56" gradientUnits="userSpaceOnUse" x1="954.6" y1="56.0" x2="892.5" y2="332.1"><stop offset="0.00" stop-color="#ae7eff"/><stop offset="0.25" stop-color="#b686ff"/><stop offset="0.50" stop-color="#c290fc"/><stop offset="0.75" stop-color="#ce99fa"/><stop offset="1.00" stop-color="#de9ff8"/></linearGradient>
<linearGradient id="s57" gradientUnits="userSpaceOnUse" x1="963.9" y1="56.0" x2="896.4" y2="331.4"><stop offset="0.00" stop-color="#ac7cff"/><stop offset="0.25" stop-color="#b484ff"/><stop offset="0.50" stop-color="#be8efc"/><stop offset="0.75" stop-color="#ca97fa"/><stop offset="1.00" stop-color="#da9df8"/></linearGradient>
<linearGradient id="s58" gradientUnits="userSpaceOnUse" x1="973.1" y1="56.0" x2="900.2" y2="330.7"><stop offset="0.00" stop-color="#a878ff"/><stop offset="0.25" stop-color="#b080ff"/><stop offset="0.50" stop-color="#bc8bfd"/><stop offset="0.75" stop-color="#c894fc"/><stop offset="1.00" stop-color="#d69bfa"/></linearGradient>
<linearGradient id="s59" gradientUnits="userSpaceOnUse" x1="982.4" y1="56.0" x2="904.1" y2="330.0"><stop offset="0.00" stop-color="#a676ff"/><stop offset="0.25" stop-color="#ae7eff"/><stop offset="0.50" stop-color="#b888fe"/><stop offset="0.75" stop-color="#c492fc"/><stop offset="1.00" stop-color="#d299fa"/></linearGradient>
<linearGradient id="s60" gradientUnits="userSpaceOnUse" x1="991.6" y1="56.0" x2="908.0" y2="329.3"><stop offset="0.00" stop-color="#a272ff"/><stop offset="0.25" stop-color="#aa7aff"/><stop offset="0.50" stop-color="#b486fe"/><stop offset="0.75" stop-color="#c090fc"/><stop offset="1.00" stop-color="#ce97fa"/></linearGradient>
<linearGradient id="s61" gradientUnits="userSpaceOnUse" x1="1000.9" y1="56.0" x2="911.9" y2="328.6"><stop offset="0.00" stop-color="#a070ff"/><stop offset="0.25" stop-color="#a878ff"/><stop offset="0.50" stop-color="#b083fe"/><stop offset="0.75" stop-color="#bc8efc"/><stop offset="1.00" stop-color="#ca95fa"/></linearGradient>
<linearGradient id="s62" gradientUnits="userSpaceOnUse" x1="1010.1" y1="56.0" x2="915.7" y2="327.9"><stop offset="0.00" stop-color="#9c6cff"/><stop offset="0.25" stop-color="#a474ff"/><stop offset="0.50" stop-color="#ae80fe"/><stop offset="0.75" stop-color="#ba8bfe"/><stop offset="1.00" stop-color="#c693fc"/></linearGradient>
<linearGradient id="s63" gradientUnits="userSpaceOnUse" x1="1019.4" y1="56.0" x2="919.6" y2="327.2"><stop offset="0.00" stop-color="#9a6aff"/><stop offset="0.25" stop-color="#a272ff"/><stop offset="0.50" stop-color="#aa7eff"/><stop offset="0.75" stop-color="#b689fe"/><stop offset="1.00" stop-color="#c291fc"/></linearGradient>
<linearGradient id="s64" gradientUnits="userSpaceOnUse" x1="1026.6" y1="56.0" x2="923.2" y2="326.5"><stop offset="0.00" stop-color="#9566ff"/><stop offset="0.25" stop-color="#9d6eff"/><stop offset="0.50" stop-color="#a479ff"/><stop offset="0.75" stop-color="#b085fe"/><stop offset="1.00" stop-color="#bb8dfc"/></linearGradient>
<linearGradient id="s65" gradientUnits="userSpaceOnUse" x1="1031.7" y1="56.0" x2="926.5" y2="325.9"><stop offset="0.00" stop-color="#8f60ff"/><stop offset="0.25" stop-color="#9668ff"/><stop offset="0.50" stop-color="#9e74ff"/><stop offset="0.75" stop-color="#a87ffe"/><stop offset="1.00" stop-color="#b187fc"/></linearGradient>
<linearGradient id="s66" gradientUnits="userSpaceOnUse" x1="1036.8" y1="56.0" x2="929.8" y2="325.3"><stop offset="0.00" stop-color="#895cff"/><stop offset="0.25" stop-color="#9064ff"/><stop offset="0.50" stop-color="#966eff"/><stop offset="0.75" stop-color="#9e79fe"/><stop offset="1.00" stop-color="#a781fd"/></linearGradient>
<linearGradient id="s67" gradientUnits="userSpaceOnUse" x1="1041.9" y1="56.0" x2="933.1" y2="324.7"><stop offset="0.00" stop-color="#8356ff"/><stop offset="0.25" stop-color="#895eff"/><stop offset="0.50" stop-color="#9069ff"/><stop offset="0.75" stop-color="#9673fe"/><stop offset="1.00" stop-color="#9d7bfe"/></linearGradient>
<linearGradient id="s68" gradientUnits="userSpaceOnUse" x1="1047.1" y1="56.0" x2="936.5" y2="324.1"><stop offset="0.00" stop-color="#7d52ff"/><stop offset="0.25" stop-color="#835aff"/><stop offset="0.50" stop-color="#8863ff"/><stop offset="0.75" stop-color="#8e6dfe"/><stop offset="1.00" stop-color="#9375fe"/></linearGradient>
<linearGradient id="s69" gradientUnits="userSpaceOnUse" x1="1052.2" y1="56.0" x2="939.8" y2="323.5"><stop offset="0.00" stop-color="#774cff"/><stop offset="0.25" stop-color="#7c54ff"/><stop offset="0.50" stop-color="#825eff"/><stop offset="0.75" stop-color="#8667ff"/><stop offset="1.00" stop-color="#896ffe"/></linearGradient>
<linearGradient id="s70" gradientUnits="userSpaceOnUse" x1="1057.3" y1="56.0" x2="943.1" y2="322.9"><stop offset="0.00" stop-color="#7148ff"/><stop offset="0.25" stop-color="#7650ff"/><stop offset="0.50" stop-color="#7a58ff"/><stop offset="0.75" stop-color="#7c61ff"/><stop offset="1.00" stop-color="#7f69fe"/></linearGradient>
<linearGradient id="s71" gradientUnits="userSpaceOnUse" x1="1062.4" y1="56.0" x2="946.4" y2="322.2"><stop offset="0.00" stop-color="#6b42ff"/><stop offset="0.25" stop-color="#6f4aff"/><stop offset="0.50" stop-color="#7453ff"/><stop offset="0.75" stop-color="#745bff"/><stop offset="1.00" stop-color="#7563ff"/></linearGradient>
<linearGradient id="s72" gradientUnits="userSpaceOnUse" x1="1066.9" y1="56.0" x2="949.8" y2="321.6"><stop offset="0.00" stop-color="#663cff"/><stop offset="0.25" stop-color="#6a44ff"/><stop offset="0.50" stop-color="#6e4cff"/><stop offset="0.75" stop-color="#6e53ff"/><stop offset="1.00" stop-color="#6e5bff"/></linearGradient>
<linearGradient id="s73" gradientUnits="userSpaceOnUse" x1="1070.8" y1="56.0" x2="953.4" y2="321.0"><stop offset="0.00" stop-color="#6434ff"/><stop offset="0.25" stop-color="#663cff"/><stop offset="0.50" stop-color="#6a42ff"/><stop offset="0.75" stop-color="#6a4aff"/><stop offset="1.00" stop-color="#6a51ff"/></linearGradient>
<linearGradient id="s74" gradientUnits="userSpaceOnUse" x1="1074.7" y1="56.0" x2="957.0" y2="320.3"><stop offset="0.00" stop-color="#602cff"/><stop offset="0.25" stop-color="#6432ff"/><stop offset="0.50" stop-color="#663aff"/><stop offset="0.75" stop-color="#6640ff"/><stop offset="1.00" stop-color="#6647ff"/></linearGradient>
<linearGradient id="s75" gradientUnits="userSpaceOnUse" x1="1078.6" y1="56.0" x2="960.6" y2="319.7"><stop offset="0.00" stop-color="#5e24ff"/><stop offset="0.25" stop-color="#602aff"/><stop offset="0.50" stop-color="#6230ff"/><stop offset="0.75" stop-color="#6237ff"/><stop offset="1.00" stop-color="#623dff"/></linearGradient>
<linearGradient id="s76" gradientUnits="userSpaceOnUse" x1="1082.4" y1="56.0" x2="964.1" y2="319.0"><stop offset="0.00" stop-color="#5a1cff"/><stop offset="0.25" stop-color="#5c22ff"/><stop offset="0.50" stop-color="#5e28ff"/><stop offset="0.75" stop-color="#5e2dff"/><stop offset="1.00" stop-color="#5e33ff"/></linearGradient>
<linearGradient id="s77" gradientUnits="userSpaceOnUse" x1="1086.3" y1="56.0" x2="967.7" y2="318.3"><stop offset="0.00" stop-color="#5814ff"/><stop offset="0.25" stop-color="#581aff"/><stop offset="0.50" stop-color="#5a1eff"/><stop offset="0.75" stop-color="#5a24ff"/><stop offset="1.00" stop-color="#5a29ff"/></linearGradient>
<linearGradient id="s78" gradientUnits="userSpaceOnUse" x1="1090.2" y1="56.0" x2="971.3" y2="317.7"><stop offset="0.00" stop-color="#540cff"/><stop offset="0.25" stop-color="#5610ff"/><stop offset="0.50" stop-color="#5616ff"/><stop offset="0.75" stop-color="#561aff"/><stop offset="1.00" stop-color="#561fff"/></linearGradient>
<linearGradient id="s79" gradientUnits="userSpaceOnUse" x1="1094.1" y1="56.0" x2="974.8" y2="317.0"><stop offset="0.00" stop-color="#5204ff"/><stop offset="0.25" stop-color="#5208ff"/><stop offset="0.50" stop-color="#520cff"/><stop offset="0.75" stop-color="#5211ff"/><stop offset="1.00" stop-color="#5215ff"/></linearGradient>
<linearGradient id="s80" gradientUnits="userSpaceOnUse" x1="1098.1" y1="56.0" x2="979.4" y2="316.2"><stop offset="0.00" stop-color="#5000fd"/><stop offset="0.25" stop-color="#5004fe"/><stop offset="0.50" stop-color="#5008fe"/><stop offset="0.75" stop-color="#500bfe"/><stop offset="1.00" stop-color="#500ffe"/></linearGradient>
<linearGradient id="s81" gradientUnits="userSpaceOnUse" x1="1102.4" y1="56.0" x2="985.0" y2="315.2"><stop offset="0.00" stop-color="#5000f9"/><stop offset="0.25" stop-color="#5004fa"/><stop offset="0.50" stop-color="#5006fc"/><stop offset="0.75" stop-color="#500afc"/><stop offset="1.00" stop-color="#500dfe"/></linearGradient>
<linearGradient id="s82" gradientUnits="userSpaceOnUse" x1="1106.6" y1="56.0" x2="990.6" y2="314.1"><stop offset="0.00" stop-color="#4e00f5"/><stop offset="0.25" stop-color="#4f02f8"/><stop offset="0.50" stop-color="#5006f9"/><stop offset="0.75" stop-color="#5008fb"/><stop offset="1.00" stop-color="#500bfc"/></linearGradient>
<linearGradient id="s83" gradientUnits="userSpaceOnUse" x1="1110.9" y1="56.0" x2="996.2" y2="313.1"><stop offset="0.00" stop-color="#4e00f2"/><stop offset="0.25" stop-color="#4e02f4"/><stop offset="0.50" stop-color="#4f04f7"/><stop offset="0.75" stop-color="#5007f9"/><stop offset="1.00" stop-color="#5009fc"/></linearGradient>
<linearGradient id="s84" gradientUnits="userSpaceOnUse" x1="1115.1" y1="56.0" x2="1001.8" y2="312.1"><stop offset="0.00" stop-color="#4e00ee"/><stop offset="0.25" stop-color="#4e02f0"/><stop offset="0.50" stop-color="#4f04f4"/><stop offset="0.75" stop-color="#5005f8"/><stop offset="1.00" stop-color="#5007fc"/></linearGradient>
<linearGradient id="s85" gradientUnits="userSpaceOnUse" x1="1119.4" y1="56.0" x2="1007.4" y2="311.1"><stop offset="0.00" stop-color="#4e00ea"/><stop offset="0.25" stop-color="#4e02ee"/><stop offset="0.50" stop-color="#4e02f2"/><stop offset="0.75" stop-color="#4f04f6"/><stop offset="1.00" stop-color="#5005fa"/></linearGradient>
<linearGradient id="s86" gradientUnits="userSpaceOnUse" x1="1123.6" y1="56.0" x2="1013.0" y2="310.0"><stop offset="0.00" stop-color="#4c00e6"/><stop offset="0.25" stop-color="#4e00ea"/><stop offset="0.50" stop-color="#4e02f0"/><stop offset="0.75" stop-color="#4f02f4"/><stop offset="1.00" stop-color="#5003fa"/></linearGradient>
<linearGradient id="s87" gradientUnits="userSpaceOnUse" x1="1127.9" y1="56.0" x2="1018.6" y2="309.0"><stop offset="0.00" stop-color="#4c00e2"/><stop offset="0.25" stop-color="#4d00e8"/><stop offset="0.50" stop-color="#4e00ed"/><stop offset="0.75" stop-color="#4f01f3"/><stop offset="1.00" stop-color="#5001f8"/></linearGradient>
<linearGradient id="s88" gradientUnits="userSpaceOnUse" x1="1132.2" y1="56.0" x2="1024.0" y2="308.0"><stop offset="0.00" stop-color="#4b00de"/><stop offset="0.25" stop-color="#4c00e4"/><stop offset="0.50" stop-color="#4e00ea"/><stop offset="0.75" stop-color="#5000f0"/><stop offset="1.00" stop-color="#5100f6"/></linearGradient>
<linearGradient id="s89" gradientUnits="userSpaceOnUse" x1="1136.8" y1="56.0" x2="1029.1" y2="307.1"><stop offset="0.00" stop-color="#4a00da"/><stop offset="0.25" stop-color="#4c00e0"/><stop offset="0.50" stop-color="#4e00e6"/><stop offset="0.75" stop-color="#5000ee"/><stop offset="1.00" stop-color="#5200f4"/></linearGradient>
<linearGradient id="s90" gradientUnits="userSpaceOnUse" x1="1141.2" y1="56.0" x2="1034.3" y2="306.1"><stop offset="0.00" stop-color="#4800d6"/><stop offset="0.25" stop-color="#4c00dc"/><stop offset="0.50" stop-color="#4e00e4"/><stop offset="0.75" stop-color="#5000ea"/><stop offset="1.00" stop-color="#5400f0"/></linearGradient>
<linearGradient id="s91" gradientUnits="userSpaceOnUse" x1="1145.8" y1="56.0" x2="1039.5" y2="305.2"><stop offset="0.00" stop-color="#4700d2"/><stop offset="0.25" stop-color="#4a00d9"/><stop offset="0.50" stop-color="#4e00e0"/><stop offset="0.75" stop-color="#5200e6"/><stop offset="1.00" stop-color="#5500ee"/></linearGradient>
<linearGradient id="s92" gradientUnits="userSpaceOnUse" x1="1150.2" y1="56.0" x2="1044.6" y2="304.2"><stop offset="0.00" stop-color="#4500ce"/><stop offset="0.25" stop-color="#4a00d5"/><stop offset="0.50" stop-color="#4e00dc"/><stop offset="0.75" stop-color="#5200e4"/><stop offset="1.00" stop-color="#5700ea"/></linearGradient>
<linearGradient id="s93" gradientUnits="userSpaceOnUse" x1="1154.8" y1="56.0" x2="1049.8" y2="303.3"><stop offset="0.00" stop-color="#4400ca"/><stop offset="0.25" stop-color="#4800d2"/><stop offset="0.50" stop-color="#4e00d8"/><stop offset="0.75" stop-color="#5400e0"/><stop offset="1.00" stop-color="#5800e8"/></linearGradient>
<linearGradient id="s94" gradientUnits="userSpaceOnUse" x1="1159.2" y1="56.0" x2="1055.0" y2="302.3"><stop offset="0.00" stop-color="#4200c6"/><stop offset="0.25" stop-color="#4800ce"/><stop offset="0.50" stop-color="#4e00d6"/><stop offset="0.75" stop-color="#5400dc"/><stop offset="1.00" stop-color="#5a00e4"/></linearGradient>
<linearGradient id="s95" gradientUnits="userSpaceOnUse" x1="1163.8" y1="56.0" x2="1060.1" y2="301.4"><stop offset="0.00" stop-color="#4100c2"/><stop offset="0.25" stop-color="#4800ca"/><stop offset="0.50" stop-color="#4e00d2"/><stop offset="0.75" stop-color="#5400da"/><stop offset="1.00" stop-color="#5b00e2"/></linearGradient>
<linearGradient id="s96" gradientUnits="userSpaceOnUse" x1="1166.0" y1="60.0" x2="1064.1" y2="300.7"><stop offset="0.00" stop-color="#4100c0"/><stop offset="0.25" stop-color="#4800c8"/><stop offset="0.50" stop-color="#4f00cf"/><stop offset="0.75" stop-color="#5600d7"/><stop offset="1.00" stop-color="#5d00de"/></linearGradient>
<linearGradient id="s97" gradientUnits="userSpaceOnUse" x1="1166.0" y1="68.0" x2="1066.9" y2="300.2"><stop offset="0.00" stop-color="#4200c0"/><stop offset="0.25" stop-color="#4a00c6"/><stop offset="0.50" stop-color="#5100ce"/><stop offset="0.75" stop-color="#5800d5"/><stop offset="1.00" stop-color="#6000dc"/></linearGradient>
<linearGradient id="s98" gradientUnits="userSpaceOnUse" x1="1166.0" y1="76.0" x2="1069.7" y2="299.6"><stop offset="0.00" stop-color="#4400c0"/><stop offset="0.25" stop-color="#4b00c6"/><stop offset="0.50" stop-color="#5300cc"/><stop offset="0.75" stop-color="#5b00d2"/><stop offset="1.00" stop-color="#6200d8"/></linearGradient>
<linearGradient id="s99" gradientUnits="userSpaceOnUse" x1="1166.0" y1="84.0" x2="1072.5" y2="299.1"><stop offset="0.00" stop-color="#4500c0"/><stop offset="0.25" stop-color="#4d00c6"/><stop offset="0.50" stop-color="#5500cb"/><stop offset="0.75" stop-color="#5d00d0"/><stop offset="1.00" stop-color="#6500d6"/></linearGradient>
<linearGradient id="s100" gradientUnits="userSpaceOnUse" x1="1166.0" y1="92.0" x2="1075.3" y2="298.6"><stop offset="0.00" stop-color="#4700c0"/><stop offset="0.25" stop-color="#4f00c4"/><stop offset="0.50" stop-color="#5700c9"/><stop offset="0.75" stop-color="#5f00ce"/><stop offset="1.00" stop-color="#6700d2"/></linearGradient>
<linearGradient id="s101" gradientUnits="userSpaceOnUse" x1="1166.0" y1="100.0" x2="1078.1" y2="298.1"><stop offset="0.00" stop-color="#4800c0"/><stop offset="0.25" stop-color="#5100c4"/><stop offset="0.50" stop-color="#5900c8"/><stop offset="0.75" stop-color="#6100cc"/><stop offset="1.00" stop-color="#6a00d0"/></linearGradient>
<linearGradient id="s102" gradientUnits="userSpaceOnUse" x1="1166.0" y1="108.0" x2="1080.9" y2="297.6"><stop offset="0.00" stop-color="#4a00c0"/><stop offset="0.25" stop-color="#5200c4"/><stop offset="0.50" stop-color="#5b00c6"/><stop offset="0.75" stop-color="#6400c9"/><stop offset="1.00" stop-color="#6c00cc"/></linearGradient>
<linearGradient id="s103" gradientUnits="userSpaceOnUse" x1="1166.0" y1="116.0" x2="1083.7" y2="297.1"><stop offset="0.00" stop-color="#4b00c0"/><stop offset="0.25" stop-color="#5400c2"/><stop offset="0.50" stop-color="#5d00c5"/><stop offset="0.75" stop-color="#6600c7"/><stop offset="1.00" stop-color="#6f00ca"/></linearGradient>
<linearGradient id="s104" gradientUnits="userSpaceOnUse" x1="1166.0" y1="123.4" x2="1086.3" y2="296.6"><stop offset="0.00" stop-color="#4e00c0"/><stop offset="0.25" stop-color="#5600c2"/><stop offset="0.50" stop-color="#6000c3"/><stop offset="0.75" stop-color="#6800c5"/><stop offset="1.00" stop-color="#7200c7"/></linearGradient>
<linearGradient id="s105" gradientUnits="userSpaceOnUse" x1="1166.0" y1="130.3" x2="1088.6" y2="296.2"><stop offset="0.00" stop-color="#5200be"/><stop offset="0.25" stop-color="#5a00c0"/><stop offset="0.50" stop-color="#6200c2"/><stop offset="0.75" stop-color="#6c00c3"/><stop offset="1.00" stop-color="#7400c5"/></linearGradient>
<linearGradient id="s106" gradientUnits="userSpaceOnUse" x1="1166.0" y1="137.2" x2="1091.0" y2="295.7"><stop offset="0.00" stop-color="#5400be"/><stop offset="0.25" stop-color="#5e00bf"/><stop offset="0.50" stop-color="#6600c0"/><stop offset="0.75" stop-color="#6e00c2"/><stop offset="1.00" stop-color="#7800c3"/></linearGradient>
<linearGradient id="s107" gradientUnits="userSpaceOnUse" x1="1166.0" y1="144.1" x2="1093.4" y2="295.3"><stop offset="0.00" stop-color="#5800bc"/><stop offset="0.25" stop-color="#6000be"/><stop offset="0.50" stop-color="#6a00bf"/><stop offset="0.75" stop-color="#7200c0"/><stop offset="1.00" stop-color="#7a00c1"/></linearGradient>
<linearGradient id="s108" gradientUnits="userSpaceOnUse" x1="1166.0" y1="150.9" x2="1095.7" y2="294.9"><stop offset="0.00" stop-color="#5c00bc"/><stop offset="0.25" stop-color="#6400bc"/><stop offset="0.50" stop-color="#6c00bd"/><stop offset="0.75" stop-color="#7600be"/><stop offset="1.00" stop-color="#7e00bf"/></linearGradient>
<linearGradient id="s109" gradientUnits="userSpaceOnUse" x1="1166.0" y1="157.8" x2="1098.1" y2="294.4"><stop offset="0.00" stop-color="#6000ba"/><stop offset="0.25" stop-color="#6800bb"/><stop offset="0.50" stop-color="#7000bc"/><stop offset="0.75" stop-color="#7800bc"/><stop offset="1.00" stop-color="#8000bd"/></linearGradient>
<linearGradient id="s110" gradientUnits="userSpaceOnUse" x1="1166.0" y1="164.7" x2="1100.5" y2="294.0"><stop offset="0.00" stop-color="#6200ba"/><stop offset="0.25" stop-color="#6b00ba"/><stop offset="0.50" stop-color="#7400ba"/><stop offset="0.75" stop-color="#7c00bb"/><stop offset="1.00" stop-color="#8400bb"/></linearGradient>
<linearGradient id="s111" gradientUnits="userSpaceOnUse" x1="1166.0" y1="171.6" x2="1102.8" y2="293.6"><stop offset="0.00" stop-color="#6600b8"/><stop offset="0.25" stop-color="#6e00b8"/><stop offset="0.50" stop-color="#7600b9"/><stop offset="0.75" stop-color="#7e00b9"/><stop offset="1.00" stop-color="#8600b9"/></linearGradient>
<linearGradient id="s112" gradientUnits="userSpaceOnUse" x1="1166.0" y1="177.5" x2="1105.0" y2="293.2"><stop offset="0.00" stop-color="#6a00b8"/><stop offset="0.25" stop-color="#7200b8"/><stop offset="0.50" stop-color="#7a00b8"/><stop offset="0.75" stop-color="#8200b8"/><stop offset="1.00" stop-color="#8900b8"/></linearGradient>
<linearGradient id="s113" gradientUnits="userSpaceOnUse" x1="1166.0" y1="182.5" x2="1107.0" y2="292.8"><stop offset="0.00" stop-color="#6e00b8"/><stop offset="0.25" stop-color="#7600b7"/><stop offset="0.50" stop-color="#7e00b6"/><stop offset="0.75" stop-color="#8400b6"/><stop offset="1.00" stop-color="#8c00b6"/></linearGradient>
<linearGradient id="s114" gradientUnits="userSpaceOnUse" x1="1166.0" y1="187.5" x2="1109.0" y2="292.5"><stop offset="0.00" stop-color="#7400b6"/><stop offset="0.25" stop-color="#7a00b6"/><stop offset="0.50" stop-color="#8000b6"/><stop offset="0.75" stop-color="#8800b6"/><stop offset="1.00" stop-color="#8e00b6"/></linearGradient>
<linearGradient id="s115" gradientUnits="userSpaceOnUse" x1="1166.0" y1="192.5" x2="1111.0" y2="292.1"><stop offset="0.00" stop-color="#7800b6"/><stop offset="0.25" stop-color="#7e00b6"/><stop offset="0.50" stop-color="#8400b6"/><stop offset="0.75" stop-color="#8a00b4"/><stop offset="1.00" stop-color="#9100b4"/></linearGradient>
<linearGradient id="s116" gradientUnits="userSpaceOnUse" x1="1166.0" y1="197.5" x2="1112.9" y2="291.7"><stop offset="0.00" stop-color="#7c00b6"/><stop offset="0.25" stop-color="#8200b6"/><stop offset="0.50" stop-color="#8800b4"/><stop offset="0.75" stop-color="#8e00b4"/><stop offset="1.00" stop-color="#9300b4"/></linearGradient>
<linearGradient id="s117" gradientUnits="userSpaceOnUse" x1="1166.0" y1="202.5" x2="1114.9" y2="291.4"><stop offset="0.00" stop-color="#8000b6"/><stop offset="0.25" stop-color="#8600b4"/><stop offset="0.50" stop-color="#8c00b4"/><stop offset="0.75" stop-color="#9000b4"/><stop offset="1.00" stop-color="#9600b2"/></linearGradient>
<linearGradient id="s118" gradientUnits="userSpaceOnUse" x1="1166.0" y1="207.5" x2="1116.9" y2="291.0"><stop offset="0.00" stop-color="#8600b4"/><stop offset="0.25" stop-color="#8a00b4"/><stop offset="0.50" stop-color="#8e00b4"/><stop offset="0.75" stop-color="#9400b2"/><stop offset="1.00" stop-color="#9800b2"/></linearGradient>
<linearGradient id="s119" gradientUnits="userSpaceOnUse" x1="1166.0" y1="212.5" x2="1118.9" y2="290.6"><stop offset="0.00" stop-color="#8a00b4"/><stop offset="0.25" stop-color="#8e00b4"/><stop offset="0.50" stop-color="#9200b2"/><stop offset="0.75" stop-color="#9600b2"/><stop offset="1.00" stop-color="#9b00b0"/></linearGradient>
<linearGradient id="s120" gradientUnits="userSpaceOnUse" x1="1166.0" y1="217.2" x2="1121.5" y2="290.2"><stop offset="0.00" stop-color="#8e02b4"/><stop offset="0.25" stop-color="#9202b3"/><stop offset="0.50" stop-color="#9602b2"/><stop offset="0.75" stop-color="#9a02b1"/><stop offset="1.00" stop-color="#9e02b0"/></linearGradient>
<linearGradient id="s121" gradientUnits="userSpaceOnUse" x1="1166.0" y1="221.6" x2="1124.6" y2="289.6"><stop offset="0.00" stop-color="#9206b4"/><stop offset="0.25" stop-color="#9606b2"/><stop offset="0.50" stop-color="#9a06b2"/><stop offset="0.75" stop-color="#9d08b2"/><stop offset="1.00" stop-color="#a008b0"/></linearGradient>
<linearGradient id="s122" gradientUnits="userSpaceOnUse" x1="1166.0" y1="225.9" x2="1127.8" y2="289.0"><stop offset="0.00" stop-color="#980ab2"/><stop offset="0.25" stop-color="#9a0ab2"/><stop offset="0.50" stop-color="#9e0cb2"/><stop offset="0.75" stop-color="#a00cb2"/><stop offset="1.00" stop-color="#a40cb2"/></linearGradient>
<linearGradient id="s123" gradientUnits="userSpaceOnUse" x1="1166.0" y1="230.3" x2="1131.0" y2="288.4"><stop offset="0.00" stop-color="#9c0eb2"/><stop offset="0.25" stop-color="#9e0fb2"/><stop offset="0.50" stop-color="#a110b2"/><stop offset="0.75" stop-color="#a410b2"/><stop offset="1.00" stop-color="#a612b2"/></linearGradient>
<linearGradient id="s124" gradientUnits="userSpaceOnUse" x1="1166.0" y1="234.7" x2="1134.2" y2="287.8"><stop offset="0.00" stop-color="#a012b2"/><stop offset="0.25" stop-color="#a213b2"/><stop offset="0.50" stop-color="#a514b2"/><stop offset="0.75" stop-color="#a816b2"/><stop offset="1.00" stop-color="#aa16b2"/></linearGradient>
<linearGradient id="s125" gradientUnits="userSpaceOnUse" x1="1166.0" y1="239.1" x2="1137.4" y2="287.2"><stop offset="0.00" stop-color="#a416b2"/><stop offset="0.25" stop-color="#a718b2"/><stop offset="0.50" stop-color="#a818b2"/><stop offset="0.75" stop-color="#aa1ab2"/><stop offset="1.00" stop-color="#ac1cb2"/></linearGradient>
<linearGradient id="s126" gradientUnits="userSpaceOnUse" x1="1166.0" y1="243.4" x2="1140.6" y2="286.7"><stop offset="0.00" stop-color="#aa1ab0"/><stop offset="0.25" stop-color="#ab1cb2"/><stop offset="0.50" stop-color="#ac1eb2"/><stop offset="0.75" stop-color="#ae1eb2"/><stop offset="1.00" stop-color="#b020b4"/></linearGradient>
<linearGradient id="s127" gradientUnits="userSpaceOnUse" x1="1166.0" y1="247.8" x2="1143.7" y2="286.1"><stop offset="0.00" stop-color="#ae1eb0"/><stop offset="0.25" stop-color="#af20b1"/><stop offset="0.50" stop-color="#b022b2"/><stop offset="0.75" stop-color="#b224b3"/><stop offset="1.00" stop-color="#b226b4"/></linearGradient>
<linearGradient id="s128" gradientUnits="userSpaceOnUse" x1="1166.0" y1="252.0" x2="1146.6" y2="285.5"><stop offset="0.00" stop-color="#b123b1"/><stop offset="0.25" stop-color="#b225b2"/><stop offset="0.50" stop-color="#b327b3"/><stop offset="0.75" stop-color="#b428b4"/><stop offset="1.00" stop-color="#b52ab5"/></linearGradient>
<linearGradient id="s129" gradientUnits="userSpaceOnUse" x1="1166.0" y1="256.0" x2="1149.2" y2="285.1"><stop offset="0.00" stop-color="#b329b3"/><stop offset="0.25" stop-color="#b42bb4"/><stop offset="0.50" stop-color="#b52cb5"/><stop offset="0.75" stop-color="#b62eb6"/><stop offset="1.00" stop-color="#b630b6"/></linearGradient>
<linearGradient id="s130" gradientUnits="userSpaceOnUse" x1="1166.0" y1="260.0" x2="1151.8" y2="284.6"><stop offset="0.00" stop-color="#b52fb5"/><stop offset="0.25" stop-color="#b630b6"/><stop offset="0.50" stop-color="#b632b6"/><stop offset="0.75" stop-color="#b733b7"/><stop offset="1.00" stop-color="#b834b8"/></linearGradient>
<linearGradient id="s131" gradientUnits="userSpaceOnUse" x1="1166.0" y1="264.0" x2="1154.4" y2="284.1"><stop offset="0.00" stop-color="#b735b7"/><stop offset="0.25" stop-color="#b836b8"/><stop offset="0.50" stop-color="#b837b8"/><stop offset="0.75" stop-color="#b938b9"/><stop offset="1.00" stop-color="#b93ab9"/></linearGradient>
<linearGradient id="s132" gradientUnits="userSpaceOnUse" x1="1166.0" y1="268.0" x2="1157.0" y2="283.7"><stop offset="0.00" stop-color="#b93bb9"/><stop offset="0.25" stop-color="#b93cb9"/><stop offset="0.50" stop-color="#ba3dba"/><stop offset="0.75" stop-color="#ba3eba"/><stop offset="1.00" stop-color="#bb3ebb"/></linearGradient>
<linearGradient id="s133" gradientUnits="userSpaceOnUse" x1="1166.0" y1="272.0" x2="1159.5" y2="283.2"><stop offset="0.00" stop-color="#bb41bb"/><stop offset="0.25" stop-color="#bb42bb"/><stop offset="0.50" stop-color="#bc42bc"/><stop offset="0.75" stop-color="#bc43bc"/><stop offset="1.00" stop-color="#bc44bc"/></linearGradient>
<linearGradient id="s134" gradientUnits="userSpaceOnUse" x1="1166.0" y1="276.0" x2="1162.1" y2="282.7"><stop offset="0.00" stop-color="#bd47bd"/><stop offset="0.25" stop-color="#bd47bd"/><stop offset="0.50" stop-color="#bd48bd"/><stop offset="0.75" stop-color="#be48be"/><stop offset="1.00" stop-color="#be48be"/></linearGradient>
<linearGradient id="s135" gradientUnits="userSpaceOnUse" x1="1166.0" y1="280.0" x2="1164.7" y2="282.2"><stop offset="0.00" stop-color="#bf4dbf"/><stop offset="0.25" stop-color="#bf4dbf"/><stop offset="0.50" stop-color="#bf4dbf"/><stop offset="0.75" stop-color="#bf4ebf"/><stop offset="1.00" stop-color="#bf4ebf"/></linearGradient>
<linearGradient id="s136" gradientUnits="userSpaceOnUse" x1="1166.0" y1="284.4" x2="1168.2" y2="281.6"><stop offset="0.00" stop-color="#c050c0"/><stop offset="0.25" stop-color="#c050c0"/><stop offset="0.50" stop-color="#c050c0"/><stop offset="0.75" stop-color="#c050c0"/><stop offset="1.00" stop-color="#c050c0"/></linearGradient>
<linearGradient id="s137" gradientUnits="userSpaceOnUse" x1="1166.0" y1="289.1" x2="1172.5" y2="280.8"><stop offset="0.00" stop-color="#c050c0"/><stop offset="0.25" stop-color="#c050c0"/><stop offset="0.50" stop-color="#c050c0"/><stop offset="0.75" stop-color="#c050c0"/><stop offset="1.00" stop-color="#c050c0"/></linearGradient>
<linearGradient id="s138" gradientUnits="userSpaceOnUse" x1="1166.0" y1="293.9" x2="1176.8" y2="280.0"><stop offset="0.00" stop-color="#c050c0"/><stop offset="0.25" stop-color="#c050c0"/><stop offset="0.50" stop-color="#c050c0"/><stop offset="0.75" stop-color="#c050c0"/><stop offset="1.00" stop-color="#c050c0"/></linearGradient>
<linearGradient id="s139" gradientUnits="userSpaceOnUse" x1="1166.0" y1="298.6" x2="1181.1" y2="279.2"><stop offset="0.00" stop-color="#c050c0"/><stop offset="0.25" stop-color="#c050c0"/><stop offset="0.50" stop-color="#c050c0"/><stop offset="0.75" stop-color="#c050c0"/><stop offset="1.00" stop-color="#c050c0"/></linearGradient>
<linearGradient id="s140" gradientUnits="userSpaceOnUse" x1="1166.0" y1="303.4" x2="1185.4" y2="278.5"><stop offset="0.00" stop-color="#c050c0"/><stop offset="0.25" stop-color="#c050c0"/><stop offset="0.50" stop-color="#c050c0"/><stop offset="0.75" stop-color="#c050c0"/><stop offset="1.00" stop-color="#c050c0"/></linearGradient>
<linearGradient id="s141" gradientUnits="userSpaceOnUse" x1="1166.0" y1="308.1" x2="1189.7" y2="277.7"><stop offset="0.00" stop-color="#c050c0"/><stop offset="0.25" stop-color="#c050c0"/><stop offset="0.50" stop-color="#c050c0"/><stop offset="0.75" stop-color="#c050c0"/><stop offset="1.00" stop-color="#c050c0"/></linearGradient>
<linearGradient id="s142" gradientUnits="userSpaceOnUse" x1="1166.0" y1="312.9" x2="1194.0" y2="276.9"><stop offset="0.00" stop-color="#c050c0"/><stop offset="0.25" stop-color="#c050c0"/><stop offset="0.50" stop-color="#c050c0"/><stop offset="0.75" stop-color="#c050c0"/><stop offset="1.00" stop-color="#c050c0"/></linearGradient>
<linearGradient id="s143" gradientUnits="userSpaceOnUse" x1="1166.0" y1="317.6" x2="1198.3" y2="276.1"><stop offset="0.00" stop-color="#c050c0"/><stop offset="0.25" stop-color="#c050c0"/><stop offset="0.50" stop-color="#c050c0"/><stop offset="0.75" stop-color="#c050c0"/><stop offset="1.00" stop-color="#c050c0"/></linearGradient>
</defs>
<rect x="79" y="56" width="1087" height="583" fill="#00003a"/>
<!-- A -->
<g clip-path="url(#cA)">
  <rect x="79" y="56" width="800" height="583" fill="url(#gAmb)"/>
  <rect x="79" y="56" width="800" height="583" fill="url(#gA)"/>
  <polygon filter="url(#b25)" points="570,700 600,610 640,500 670,430 698,372 690,322 553,194 457,106 400,40 520,40 900,300 900,700" fill="#00003a"/>
  <g mask="url(#mBot)">
    <polygon filter="url(#b25)" points="570,700 600,610 640,500 670,430 705,380 745,345 800,325 900,300 900,700" fill="#2a0072"/>
  </g>
  <g mask="url(#mMag)">
    <polygon filter="url(#b10)" points="524,700 574,700 650,440 632,440" fill="#e838c8" opacity=".8"/>
  </g>
</g>
<!-- B -->
<g clip-path="url(#cB)">
<g filter="url(#b3)">
<polygon points="410.7,28.8 419.1,28.8 775.1,359.3 767.6,360.5" fill="url(#s0)" stroke="url(#s0)" stroke-width="1.5"/>
<polygon points="419.1,28.8 427.4,28.8 782.6,358.0 775.1,359.3" fill="url(#s1)" stroke="url(#s1)" stroke-width="1.5"/>
<polygon points="427.4,28.8 435.8,28.8 790.1,356.8 782.6,358.0" fill="url(#s2)" stroke="url(#s2)" stroke-width="1.5"/>
<polygon points="435.8,28.8 444.1,28.9 797.6,355.5 790.1,356.8" fill="url(#s3)" stroke="url(#s3)" stroke-width="1.5"/>
<polygon points="444.1,28.9 452.5,28.9 805.1,354.3 797.6,355.5" fill="url(#s4)" stroke="url(#s4)" stroke-width="1.5"/>
<polygon points="452.5,28.9 460.8,28.9 812.6,353.0 805.1,354.3" fill="url(#s5)" stroke="url(#s5)" stroke-width="1.5"/>
<polygon points="460.8,28.9 469.2,28.9 820.1,351.8 812.6,353.0" fill="url(#s6)" stroke="url(#s6)" stroke-width="1.5"/>
<polygon points="469.2,28.9 477.5,28.9 827.6,350.5 820.1,351.8" fill="url(#s7)" stroke="url(#s7)" stroke-width="1.5"/>
<polygon points="477.5,28.9 484.4,28.7 828.0,350.5 827.6,350.5" fill="url(#s8)" stroke="url(#s8)" stroke-width="1.5"/>
<polygon points="484.4,28.7 491.3,28.4 828.3,350.5 828.0,350.5" fill="url(#s9)" stroke="url(#s9)" stroke-width="1.5"/>
<polygon points="491.3,28.4 498.2,28.1 828.7,350.4 828.3,350.5" fill="url(#s10)" stroke="url(#s10)" stroke-width="1.5"/>
<polygon points="498.2,28.1 505.2,27.8 829.1,350.4 828.7,350.4" fill="url(#s11)" stroke="url(#s11)" stroke-width="1.5"/>
<polygon points="505.2,27.8 512.1,27.5 829.5,350.4 829.1,350.4" fill="url(#s12)" stroke="url(#s12)" stroke-width="1.5"/>
<polygon points="512.1,27.5 519.0,27.2 829.8,350.4 829.5,350.4" fill="url(#s13)" stroke="url(#s13)" stroke-width="1.5"/>
<polygon points="519.0,27.2 526.0,26.9 830.2,350.4 829.8,350.4" fill="url(#s14)" stroke="url(#s14)" stroke-width="1.5"/>
<polygon points="526.0,26.9 532.9,26.6 830.6,350.4 830.2,350.4" fill="url(#s15)" stroke="url(#s15)" stroke-width="1.5"/>
<polygon points="532.9,26.6 540.8,26.2 830.9,350.4 830.6,350.4" fill="url(#s16)" stroke="url(#s16)" stroke-width="1.5"/>
<polygon points="540.8,26.2 548.7,25.8 831.3,350.3 830.9,350.4" fill="url(#s17)" stroke="url(#s17)" stroke-width="1.5"/>
<polygon points="548.7,25.8 556.7,25.5 831.6,350.3 831.3,350.3" fill="url(#s18)" stroke="url(#s18)" stroke-width="1.5"/>
<polygon points="556.7,25.5 564.6,25.1 831.9,350.3 831.6,350.3" fill="url(#s19)" stroke="url(#s19)" stroke-width="1.5"/>
<polygon points="564.6,25.1 572.6,24.7 832.3,350.3 831.9,350.3" fill="url(#s20)" stroke="url(#s20)" stroke-width="1.5"/>
<polygon points="572.6,24.7 580.5,24.4 832.6,350.3 832.3,350.3" fill="url(#s21)" stroke="url(#s21)" stroke-width="1.5"/>
<polygon points="580.5,24.4 588.5,24.0 833.0,350.3 832.6,350.3" fill="url(#s22)" stroke="url(#s22)" stroke-width="1.5"/>
<polygon points="588.5,24.0 596.5,23.6 833.3,350.3 833.0,350.3" fill="url(#s23)" stroke="url(#s23)" stroke-width="1.5"/>
<polygon points="596.5,23.6 607.2,23.1 834.0,350.3 833.3,350.3" fill="url(#s24)" stroke="url(#s24)" stroke-width="1.5"/>
<polygon points="607.2,23.1 617.9,22.6 834.7,350.2 834.0,350.3" fill="url(#s25)" stroke="url(#s25)" stroke-width="1.5"/>
<polygon points="617.9,22.6 628.7,22.2 835.4,350.1 834.7,350.2" fill="url(#s26)" stroke="url(#s26)" stroke-width="1.5"/>
<polygon points="628.7,22.2 639.4,21.7 836.1,350.1 835.4,350.1" fill="url(#s27)" stroke="url(#s27)" stroke-width="1.5"/>
<polygon points="639.4,21.7 650.3,21.2 836.8,350.0 836.1,350.1" fill="url(#s28)" stroke="url(#s28)" stroke-width="1.5"/>
<polygon points="650.3,21.2 661.1,20.7 837.5,349.9 836.8,350.0" fill="url(#s29)" stroke="url(#s29)" stroke-width="1.5"/>
<polygon points="661.1,20.7 672.0,20.3 838.2,349.9 837.5,349.9" fill="url(#s30)" stroke="url(#s30)" stroke-width="1.5"/>
<polygon points="672.0,20.3 682.9,19.8 838.9,349.8 838.2,349.9" fill="url(#s31)" stroke="url(#s31)" stroke-width="1.5"/>
<polygon points="682.9,19.8 693.8,19.4 840.0,349.7 838.9,349.8" fill="url(#s32)" stroke="url(#s32)" stroke-width="1.5"/>
<polygon points="693.8,19.4 704.7,19.0 841.1,349.5 840.0,349.7" fill="url(#s33)" stroke="url(#s33)" stroke-width="1.5"/>
<polygon points="704.7,19.0 715.7,18.6 842.2,349.3 841.1,349.5" fill="url(#s34)" stroke="url(#s34)" stroke-width="1.5"/>
<polygon points="715.7,18.6 726.7,18.3 843.3,349.2 842.2,349.3" fill="url(#s35)" stroke="url(#s35)" stroke-width="1.5"/>
<polygon points="726.7,18.3 737.7,17.9 844.4,349.0 843.3,349.2" fill="url(#s36)" stroke="url(#s36)" stroke-width="1.5"/>
<polygon points="737.7,17.9 748.8,17.6 845.5,348.8 844.4,349.0" fill="url(#s37)" stroke="url(#s37)" stroke-width="1.5"/>
<polygon points="748.8,17.6 759.9,17.3 846.5,348.7 845.5,348.8" fill="url(#s38)" stroke="url(#s38)" stroke-width="1.5"/>
<polygon points="759.9,17.3 771.0,17.0 847.6,348.5 846.5,348.7" fill="url(#s39)" stroke="url(#s39)" stroke-width="1.5"/>
<polygon points="771.0,17.0 782.1,16.8 849.1,348.2 847.6,348.5" fill="url(#s40)" stroke="url(#s40)" stroke-width="1.5"/>
<polygon points="782.1,16.8 793.2,16.6 850.6,347.9 849.1,348.2" fill="url(#s41)" stroke="url(#s41)" stroke-width="1.5"/>
<polygon points="793.2,16.6 804.3,16.4 852.1,347.7 850.6,347.9" fill="url(#s42)" stroke="url(#s42)" stroke-width="1.5"/>
<polygon points="804.3,16.4 815.4,16.3 853.6,347.4 852.1,347.7" fill="url(#s43)" stroke="url(#s43)" stroke-width="1.5"/>
<polygon points="815.4,16.3 826.6,16.1 855.1,347.1 853.6,347.4" fill="url(#s44)" stroke="url(#s44)" stroke-width="1.5"/>
<polygon points="826.6,16.1 837.7,16.1 856.6,346.8 855.1,347.1" fill="url(#s45)" stroke="url(#s45)" stroke-width="1.5"/>
<polygon points="837.7,16.1 848.9,16.0 858.1,346.5 856.6,346.8" fill="url(#s46)" stroke="url(#s46)" stroke-width="1.5"/>
<polygon points="848.9,16.0 860.1,16.0 859.6,346.2 858.1,346.5" fill="url(#s47)" stroke="url(#s47)" stroke-width="1.5"/>
<polygon points="860.1,16.0 872.4,16.0 863.2,345.4 859.6,346.2" fill="url(#s48)" stroke="url(#s48)" stroke-width="1.5"/>
<polygon points="872.4,16.0 884.7,16.1 866.9,344.7 863.2,345.4" fill="url(#s49)" stroke="url(#s49)" stroke-width="1.5"/>
<polygon points="884.7,16.1 897.0,16.1 870.6,344.0 866.9,344.7" fill="url(#s50)" stroke="url(#s50)" stroke-width="1.5"/>
<polygon points="897.0,16.1 909.3,16.2 874.2,343.3 870.6,344.0" fill="url(#s51)" stroke="url(#s51)" stroke-width="1.5"/>
<polygon points="909.3,16.2 921.6,16.4 877.9,342.5 874.2,343.3" fill="url(#s52)" stroke="url(#s52)" stroke-width="1.5"/>
<polygon points="921.6,16.4 933.9,16.5 881.5,341.8 877.9,342.5" fill="url(#s53)" stroke="url(#s53)" stroke-width="1.5"/>
<polygon points="933.9,16.5 946.1,16.7 885.2,341.1 881.5,341.8" fill="url(#s54)" stroke="url(#s54)" stroke-width="1.5"/>
<polygon points="946.1,16.7 958.4,16.9 888.9,340.3 885.2,341.1" fill="url(#s55)" stroke="url(#s55)" stroke-width="1.5"/>
<polygon points="958.4,16.9 968.4,17.1 892.6,339.6 888.9,340.3" fill="url(#s56)" stroke="url(#s56)" stroke-width="1.5"/>
<polygon points="968.4,17.1 978.4,17.2 896.3,338.8 892.6,339.6" fill="url(#s57)" stroke="url(#s57)" stroke-width="1.5"/>
<polygon points="978.4,17.2 988.4,17.4 900.1,338.1 896.3,338.8" fill="url(#s58)" stroke="url(#s58)" stroke-width="1.5"/>
<polygon points="988.4,17.4 998.3,17.6 903.8,337.3 900.1,338.1" fill="url(#s59)" stroke="url(#s59)" stroke-width="1.5"/>
<polygon points="998.3,17.6 1008.3,17.9 907.5,336.6 903.8,337.3" fill="url(#s60)" stroke="url(#s60)" stroke-width="1.5"/>
<polygon points="1008.3,17.9 1018.3,18.1 911.2,335.8 907.5,336.6" fill="url(#s61)" stroke="url(#s61)" stroke-width="1.5"/>
<polygon points="1018.3,18.1 1028.2,18.3 915.0,335.0 911.2,335.8" fill="url(#s62)" stroke="url(#s62)" stroke-width="1.5"/>
<polygon points="1028.2,18.3 1038.2,18.6 918.7,334.3 915.0,335.0" fill="url(#s63)" stroke="url(#s63)" stroke-width="1.5"/>
<polygon points="1038.2,18.6 1043.5,18.7 922.0,333.7 918.7,334.3" fill="url(#s64)" stroke="url(#s64)" stroke-width="1.5"/>
<polygon points="1043.5,18.7 1048.9,18.8 925.2,333.0 922.0,333.7" fill="url(#s65)" stroke="url(#s65)" stroke-width="1.5"/>
<polygon points="1048.9,18.8 1054.3,18.9 928.5,332.4 925.2,333.0" fill="url(#s66)" stroke="url(#s66)" stroke-width="1.5"/>
<polygon points="1054.3,18.9 1059.6,19.0 931.8,331.8 928.5,332.4" fill="url(#s67)" stroke="url(#s67)" stroke-width="1.5"/>
<polygon points="1059.6,19.0 1065.0,19.1 935.0,331.1 931.8,331.8" fill="url(#s68)" stroke="url(#s68)" stroke-width="1.5"/>
<polygon points="1065.0,19.1 1070.4,19.2 938.3,330.5 935.0,331.1" fill="url(#s69)" stroke="url(#s69)" stroke-width="1.5"/>
<polygon points="1070.4,19.2 1075.7,19.3 941.6,329.9 938.3,330.5" fill="url(#s70)" stroke="url(#s70)" stroke-width="1.5"/>
<polygon points="1075.7,19.3 1081.1,19.4 944.8,329.3 941.6,329.9" fill="url(#s71)" stroke="url(#s71)" stroke-width="1.5"/>
<polygon points="1081.1,19.4 1085.0,19.4 948.4,328.6 944.8,329.3" fill="url(#s72)" stroke="url(#s72)" stroke-width="1.5"/>
<polygon points="1085.0,19.4 1089.0,19.4 952.0,327.9 948.4,328.6" fill="url(#s73)" stroke="url(#s73)" stroke-width="1.5"/>
<polygon points="1089.0,19.4 1092.9,19.5 955.5,327.3 952.0,327.9" fill="url(#s74)" stroke="url(#s74)" stroke-width="1.5"/>
<polygon points="1092.9,19.5 1096.9,19.5 959.1,326.6 955.5,327.3" fill="url(#s75)" stroke="url(#s75)" stroke-width="1.5"/>
<polygon points="1096.9,19.5 1100.8,19.5 962.6,326.0 959.1,326.6" fill="url(#s76)" stroke="url(#s76)" stroke-width="1.5"/>
<polygon points="1100.8,19.5 1104.8,19.6 966.2,325.3 962.6,326.0" fill="url(#s77)" stroke="url(#s77)" stroke-width="1.5"/>
<polygon points="1104.8,19.6 1108.7,19.6 969.7,324.6 966.2,325.3" fill="url(#s78)" stroke="url(#s78)" stroke-width="1.5"/>
<polygon points="1108.7,19.6 1112.7,19.6 973.3,324.0 969.7,324.6" fill="url(#s79)" stroke="url(#s79)" stroke-width="1.5"/>
<polygon points="1112.7,19.6 1116.8,19.6 978.9,323.0 973.3,324.0" fill="url(#s80)" stroke="url(#s80)" stroke-width="1.5"/>
<polygon points="1116.8,19.6 1120.9,19.5 984.5,321.9 978.9,323.0" fill="url(#s81)" stroke="url(#s81)" stroke-width="1.5"/>
<polygon points="1120.9,19.5 1125.1,19.5 990.2,320.9 984.5,321.9" fill="url(#s82)" stroke="url(#s82)" stroke-width="1.5"/>
<polygon points="1125.1,19.5 1129.2,19.4 995.8,319.9 990.2,320.9" fill="url(#s83)" stroke="url(#s83)" stroke-width="1.5"/>
<polygon points="1129.2,19.4 1133.4,19.4 1001.4,318.9 995.8,319.9" fill="url(#s84)" stroke="url(#s84)" stroke-width="1.5"/>
<polygon points="1133.4,19.4 1137.5,19.3 1007.0,317.9 1001.4,318.9" fill="url(#s85)" stroke="url(#s85)" stroke-width="1.5"/>
<polygon points="1137.5,19.3 1141.7,19.3 1012.6,316.9 1007.0,317.9" fill="url(#s86)" stroke="url(#s86)" stroke-width="1.5"/>
<polygon points="1141.7,19.3 1145.8,19.3 1018.2,315.9 1012.6,316.9" fill="url(#s87)" stroke="url(#s87)" stroke-width="1.5"/>
<polygon points="1145.8,19.3 1150.3,19.2 1023.4,314.9 1018.2,315.9" fill="url(#s88)" stroke="url(#s88)" stroke-width="1.5"/>
<polygon points="1150.3,19.2 1154.7,19.2 1028.6,314.0 1023.4,314.9" fill="url(#s89)" stroke="url(#s89)" stroke-width="1.5"/>
<polygon points="1154.7,19.2 1159.2,19.2 1033.7,313.0 1028.6,314.0" fill="url(#s90)" stroke="url(#s90)" stroke-width="1.5"/>
<polygon points="1159.2,19.2 1163.7,19.2 1038.9,312.1 1033.7,313.0" fill="url(#s91)" stroke="url(#s91)" stroke-width="1.5"/>
<polygon points="1163.7,19.2 1168.1,19.2 1044.1,311.1 1038.9,312.1" fill="url(#s92)" stroke="url(#s92)" stroke-width="1.5"/>
<polygon points="1168.1,19.2 1172.6,19.2 1049.3,310.2 1044.1,311.1" fill="url(#s93)" stroke="url(#s93)" stroke-width="1.5"/>
<polygon points="1172.6,19.2 1177.1,19.2 1054.4,309.2 1049.3,310.2" fill="url(#s94)" stroke="url(#s94)" stroke-width="1.5"/>
<polygon points="1177.1,19.2 1181.5,19.1 1059.6,308.3 1054.4,309.2" fill="url(#s95)" stroke="url(#s95)" stroke-width="1.5"/>
<polygon points="1181.5,19.1 1181.6,27.2 1062.4,307.8 1059.6,308.3" fill="url(#s96)" stroke="url(#s96)" stroke-width="1.5"/>
<polygon points="1181.6,27.2 1181.8,35.2 1065.2,307.3 1062.4,307.8" fill="url(#s97)" stroke="url(#s97)" stroke-width="1.5"/>
<polygon points="1181.8,35.2 1181.9,43.3 1067.9,306.7 1065.2,307.3" fill="url(#s98)" stroke="url(#s98)" stroke-width="1.5"/>
<polygon points="1181.9,43.3 1182.0,51.3 1070.7,306.2 1067.9,306.7" fill="url(#s99)" stroke="url(#s99)" stroke-width="1.5"/>
<polygon points="1182.0,51.3 1182.1,59.4 1073.5,305.7 1070.7,306.2" fill="url(#s100)" stroke="url(#s100)" stroke-width="1.5"/>
<polygon points="1182.1,59.4 1182.3,67.5 1076.2,305.2 1073.5,305.7" fill="url(#s101)" stroke="url(#s101)" stroke-width="1.5"/>
<polygon points="1182.3,67.5 1182.5,75.5 1079.0,304.6 1076.2,305.2" fill="url(#s102)" stroke="url(#s102)" stroke-width="1.5"/>
<polygon points="1182.5,75.5 1182.6,83.6 1081.8,304.1 1079.0,304.6" fill="url(#s103)" stroke="url(#s103)" stroke-width="1.5"/>
<polygon points="1182.6,83.6 1182.8,90.6 1084.1,303.7 1081.8,304.1" fill="url(#s104)" stroke="url(#s104)" stroke-width="1.5"/>
<polygon points="1182.8,90.6 1183.0,97.5 1086.4,303.2 1084.1,303.7" fill="url(#s105)" stroke="url(#s105)" stroke-width="1.5"/>
<polygon points="1183.0,97.5 1183.2,104.5 1088.7,302.7 1086.4,303.2" fill="url(#s106)" stroke="url(#s106)" stroke-width="1.5"/>
<polygon points="1183.2,104.5 1183.4,111.5 1091.1,302.3 1088.7,302.7" fill="url(#s107)" stroke="url(#s107)" stroke-width="1.5"/>
<polygon points="1183.4,111.5 1183.7,118.5 1093.4,301.8 1091.1,302.3" fill="url(#s108)" stroke="url(#s108)" stroke-width="1.5"/>
<polygon points="1183.7,118.5 1183.9,125.5 1095.7,301.4 1093.4,301.8" fill="url(#s109)" stroke="url(#s109)" stroke-width="1.5"/>
<polygon points="1183.9,125.5 1184.2,132.5 1098.0,300.9 1095.7,301.4" fill="url(#s110)" stroke="url(#s110)" stroke-width="1.5"/>
<polygon points="1184.2,132.5 1184.6,139.6 1100.3,300.4 1098.0,300.9" fill="url(#s111)" stroke="url(#s111)" stroke-width="1.5"/>
<polygon points="1184.6,139.6 1184.8,144.7 1102.3,300.1 1100.3,300.4" fill="url(#s112)" stroke="url(#s112)" stroke-width="1.5"/>
<polygon points="1184.8,144.7 1185.0,149.8 1104.2,299.7 1102.3,300.1" fill="url(#s113)" stroke="url(#s113)" stroke-width="1.5"/>
<polygon points="1185.0,149.8 1185.2,154.9 1106.1,299.3 1104.2,299.7" fill="url(#s114)" stroke="url(#s114)" stroke-width="1.5"/>
<polygon points="1185.2,154.9 1185.5,160.1 1108.0,298.9 1106.1,299.3" fill="url(#s115)" stroke="url(#s115)" stroke-width="1.5"/>
<polygon points="1185.5,160.1 1185.8,165.2 1110.0,298.5 1108.0,298.9" fill="url(#s116)" stroke="url(#s116)" stroke-width="1.5"/>
<polygon points="1185.8,165.2 1186.1,170.4 1111.9,298.1 1110.0,298.5" fill="url(#s117)" stroke="url(#s117)" stroke-width="1.5"/>
<polygon points="1186.1,170.4 1186.5,175.6 1113.8,297.7 1111.9,298.1" fill="url(#s118)" stroke="url(#s118)" stroke-width="1.5"/>
<polygon points="1186.5,175.6 1186.9,180.9 1115.7,297.3 1113.8,297.7" fill="url(#s119)" stroke="url(#s119)" stroke-width="1.5"/>
<polygon points="1186.9,180.9 1186.8,185.2 1118.9,296.7 1115.7,297.3" fill="url(#s120)" stroke="url(#s120)" stroke-width="1.5"/>
<polygon points="1186.8,185.2 1186.7,189.6 1122.1,296.1 1118.9,296.7" fill="url(#s121)" stroke="url(#s121)" stroke-width="1.5"/>
<polygon points="1186.7,189.6 1186.7,193.9 1125.3,295.6 1122.1,296.1" fill="url(#s122)" stroke="url(#s122)" stroke-width="1.5"/>
<polygon points="1186.7,193.9 1186.6,198.2 1128.5,295.0 1125.3,295.6" fill="url(#s123)" stroke="url(#s123)" stroke-width="1.5"/>
<polygon points="1186.6,198.2 1186.5,202.5 1131.7,294.4 1128.5,295.0" fill="url(#s124)" stroke="url(#s124)" stroke-width="1.5"/>
<polygon points="1186.5,202.5 1186.4,206.8 1134.9,293.8 1131.7,294.4" fill="url(#s125)" stroke="url(#s125)" stroke-width="1.5"/>
<polygon points="1186.4,206.8 1186.2,211.1 1138.1,293.3 1134.9,293.8" fill="url(#s126)" stroke="url(#s126)" stroke-width="1.5"/>
<polygon points="1186.2,211.1 1186.0,215.4 1141.3,292.7 1138.1,293.3" fill="url(#s127)" stroke="url(#s127)" stroke-width="1.5"/>
<polygon points="1186.0,215.4 1186.0,219.4 1143.9,292.2 1141.3,292.7" fill="url(#s128)" stroke="url(#s128)" stroke-width="1.5"/>
<polygon points="1186.0,219.4 1186.0,223.4 1146.5,291.8 1143.9,292.2" fill="url(#s129)" stroke="url(#s129)" stroke-width="1.5"/>
<polygon points="1186.0,223.4 1186.0,227.4 1149.1,291.3 1146.5,291.8" fill="url(#s130)" stroke="url(#s130)" stroke-width="1.5"/>
<polygon points="1186.0,227.4 1186.0,231.4 1151.7,290.8 1149.1,291.3" fill="url(#s131)" stroke="url(#s131)" stroke-width="1.5"/>
<polygon points="1186.0,231.4 1186.0,235.4 1154.3,290.3 1151.7,290.8" fill="url(#s132)" stroke="url(#s132)" stroke-width="1.5"/>
<polygon points="1186.0,235.4 1186.0,239.4 1156.8,289.9 1154.3,290.3" fill="url(#s133)" stroke="url(#s133)" stroke-width="1.5"/>
<polygon points="1186.0,239.4 1186.0,243.4 1159.4,289.4 1156.8,289.9" fill="url(#s134)" stroke="url(#s134)" stroke-width="1.5"/>
<polygon points="1186.0,243.4 1166.0,282.0 1166.0,282.0 1159.4,289.4" fill="url(#s135)" stroke="url(#s135)" stroke-width="1.5"/>
<polygon points="1166.0,282.0 1141.5,318.3 1175.2,274.9 1166.0,282.0" fill="url(#s136)" stroke="url(#s136)" stroke-width="1.5"/>
<polygon points="1141.5,318.3 1141.5,323.1 1179.5,274.1 1175.2,274.9" fill="url(#s137)" stroke="url(#s137)" stroke-width="1.5"/>
<polygon points="1141.5,323.1 1141.5,327.8 1183.8,273.3 1179.5,274.1" fill="url(#s138)" stroke="url(#s138)" stroke-width="1.5"/>
<polygon points="1141.5,327.8 1141.5,332.6 1188.1,272.5 1183.8,273.3" fill="url(#s139)" stroke="url(#s139)" stroke-width="1.5"/>
<polygon points="1141.5,332.6 1141.5,337.3 1192.4,271.7 1188.1,272.5" fill="url(#s140)" stroke="url(#s140)" stroke-width="1.5"/>
<polygon points="1141.5,337.3 1141.5,342.1 1196.7,271.0 1192.4,271.7" fill="url(#s141)" stroke="url(#s141)" stroke-width="1.5"/>
<polygon points="1141.5,342.1 1141.5,346.8 1201.0,270.2 1196.7,271.0" fill="url(#s142)" stroke="url(#s142)" stroke-width="1.5"/>
<polygon points="1141.5,346.8 1141.5,351.6 1205.3,269.4 1201.0,270.2" fill="url(#s143)" stroke="url(#s143)" stroke-width="1.5"/>
</g>
</g>
<!-- C -->
<g clip-path="url(#cC)">
  <rect x="600" y="270" width="600" height="380" fill="url(#gC)"/>
  <g mask="url(#mE3)">
  <rect x="600" y="270" width="600" height="380" fill="url(#gCv)"/>
  </g>
</g>

</svg>
</div>

<div id="h1" class="abs">Bring your images to life</div>
<div id="para" class="abs">LeiaPix Converter lets you turn any of your favorite images into<br>stunning Depth Animations.</div>
<div id="cta" class="abs">Sign in with Leia</div>

<div id="footer" class="abs"></div>
<div id="tag" class="abs">Stop Seeing. Start Feeling.</div>
<div id="copy1" class="abs">Copyright © LEIA INC. 2023</div>
<div id="copy2" class="abs">2440 Sand Hill Road, Ste 100, Menlo Park, CA 94025</div>
<div class="abs flink" style="top:695.6px">Privacy Policy</div>
<div class="abs flink" style="top:713.9px">Terms of Use</div>
<div class="abs flink" style="top:732.2px">Community Guidelines</div>
<div class="abs flink" style="top:750.6px">Depthy License</div>
</body>
</html>
